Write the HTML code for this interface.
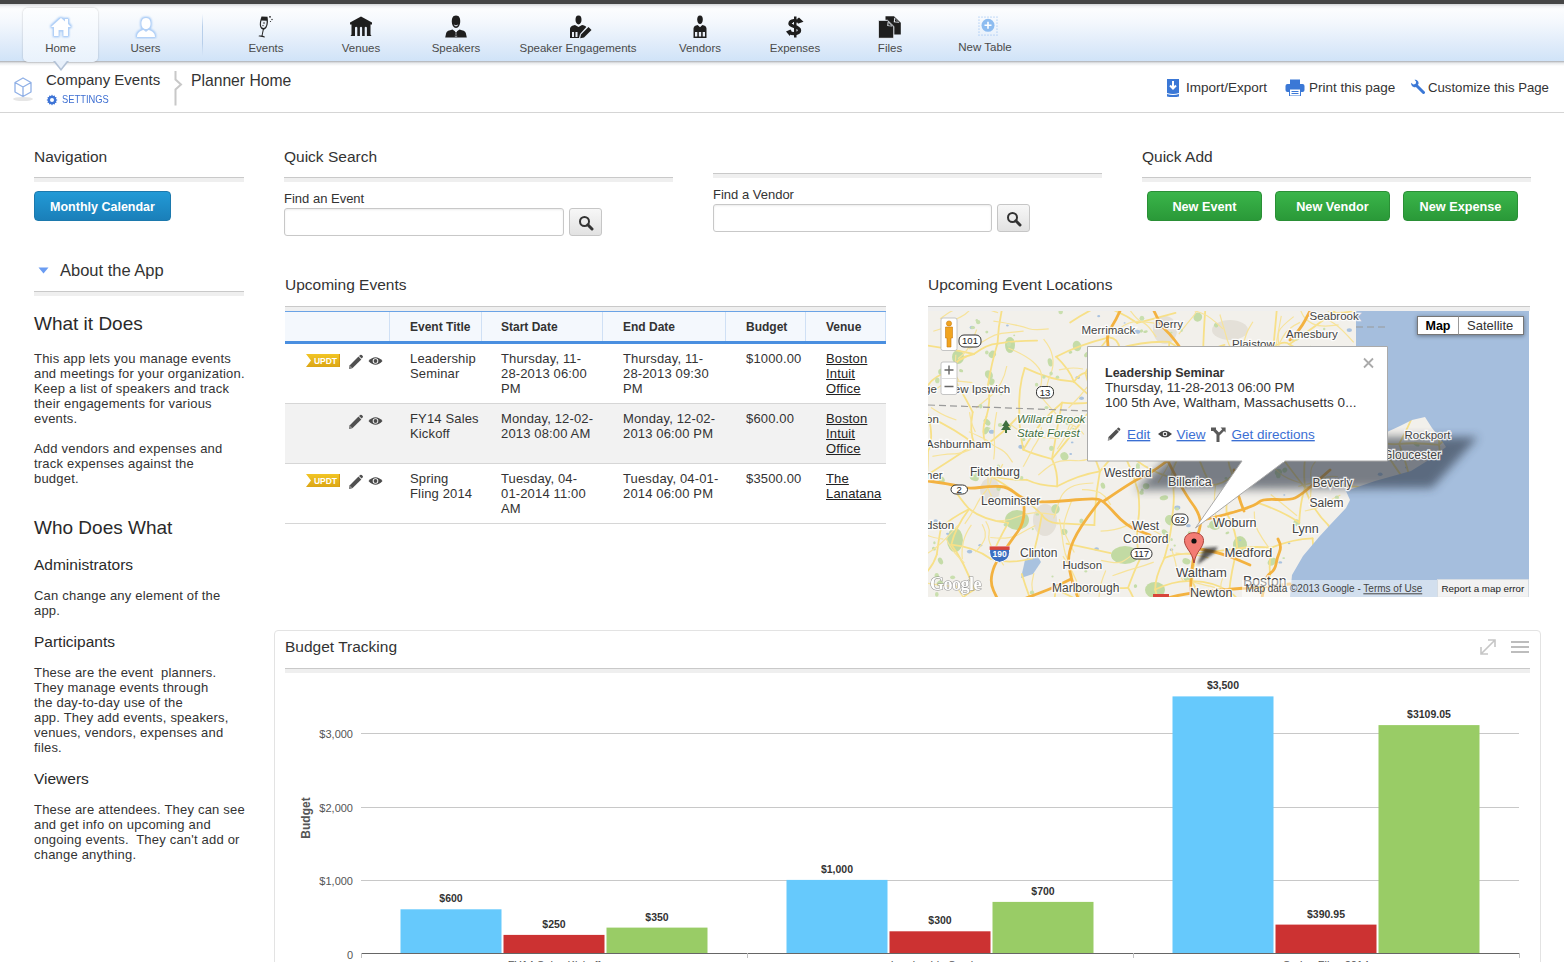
<!DOCTYPE html>
<html><head><meta charset="utf-8">
<style>
*{margin:0;padding:0;box-sizing:border-box}
html,body{width:1564px;height:962px;overflow:hidden;background:#fff;font-family:"Liberation Sans",sans-serif;color:#333}
.abs{position:absolute}
#topbar{position:absolute;left:0;top:0;width:1564px;height:4px;background:#464646}
#nav{position:absolute;left:0;top:4px;width:1564px;height:57px;background:linear-gradient(#d4d6d8 0px,#f3f4f6 2.5px,#fcfdfe 5px,#f4f8fd 18px,#e2edfa 38px,#d0e3f8 57px);}
#navshadow{position:absolute;left:0;top:61px;width:1564px;height:5px;background:linear-gradient(#a9adb2,#e8eaec 2px,#fff 5px)}
.navitem{position:absolute;top:4px;height:57px;text-align:center;font-size:11.5px;color:#444;}
.navitem .lbl{position:absolute;left:0;right:0;top:38px;white-space:nowrap;color:#4a4a4a}
.navitem svg{position:absolute;top:11px;left:50%;transform:translateX(-50%)}
#hometab{position:absolute;left:23px;top:8px;width:75px;height:54px;border-radius:5px;background:linear-gradient(#fdfeff,#e9f2fc);box-shadow:0 0 2px rgba(0,0,0,.25)}
.sep{position:absolute;left:202px;top:14px;width:1px;height:42px;background:linear-gradient(rgba(160,190,225,0),#b8cfea 30%,#b8cfea 70%,rgba(160,190,225,0))}
.h2{position:absolute;font-size:15.5px;color:#333;white-space:nowrap}
.rule{position:absolute;height:5px;border-top:1px solid #c9c9c9;background:#efefef}
.body13{font-size:13px;line-height:15px;color:#333;letter-spacing:.2px}
.btn-blue{position:absolute;border-radius:4px;background:linear-gradient(#229ad6,#1a7fb9);color:#fff;font-weight:bold;font-size:12.5px;text-align:center;line-height:30px;border:1px solid #1c79ad}
.btn-green{position:absolute;top:191px;width:115px;height:30px;border-radius:4px;background:linear-gradient(#3ab54a,#2a9938);color:#fff;font-weight:bold;font-size:12.7px;text-align:center;line-height:30px;border:1px solid #2a8f36}
.input{position:absolute;border:1px solid #c8c8c8;border-radius:3px;background:#fff;box-shadow:inset 0 1px 2px rgba(0,0,0,.08)}
.sbtn{position:absolute;width:33px;height:28px;border:1px solid #c6c6c6;border-radius:3px;background:linear-gradient(#f7f7f7,#e2e2e2)}
.sbtn svg{position:absolute;left:8px;top:6px}
table.ev{position:absolute;left:285px;top:311px;width:601px;border-collapse:collapse;font-size:13px;line-height:15px;color:#333}
.lk{color:#222;text-decoration:underline}
.th{top:320px;font-size:12px;font-weight:bold;color:#333;white-space:nowrap}
.td{font-size:13px;line-height:15px;color:#333;white-space:nowrap;letter-spacing:.15px}
</style></head><body>
<div id="topbar"></div>
<div id="nav"></div>
<div id="navshadow"></div>
<div id="hometab"></div>
<div class="sep"></div>

<!-- nav items -->
<div class="navitem" style="left:23px;width:75px">
 <svg width="26" height="24" viewBox="0 0 26 24" style="top:11px"><defs><filter id="gl" x="-40%" y="-40%" width="180%" height="180%"><feMorphology in="SourceAlpha" operator="dilate" radius="0.7"/><feGaussianBlur stdDeviation="1.1"/><feColorMatrix values="0 0 0 0 0.45 0 0 0 0 0.64 0 0 0 0 0.93 0 0 0 1.6 0"/><feMerge><feMergeNode/><feMergeNode in="SourceGraphic"/></feMerge></filter></defs>
 <path filter="url(#gl)" d="M3 12 L13 3 L17 6.5 L17 4 L20 4 L20 9 L23 12 L20 12 L20 21 L15.5 21 L15.5 15 L10.5 15 L10.5 21 L6 21 L6 12 Z" fill="#fff"/></svg>
 <div class="lbl">Home</div></div>
<div class="navitem" style="left:108px;width:75px">
 <svg width="26" height="24" viewBox="0 0 26 24"><path filter="url(#gl)" d="M13 3 C9.5 3 8.5 6 8.5 8.5 C8.5 11.5 10 14 13 14 C16 14 17.5 11.5 17.5 8.5 C17.5 6 16.5 3 13 3 Z M4 22 C4 17.5 8 15.5 10.5 15 L13 17 L15.5 15 C18 15.5 22 17.5 22 22 Z" fill="#fff"/></svg>
 <div class="lbl">Users</div></div>
<div class="navitem" style="left:228px;width:76px">
 <svg width="20" height="24" viewBox="0 0 20 24"><path d="M5.5 1.5 L11.5 1.8 C12 5 12.5 9 10.5 12.5 C9.5 14 8.5 14.5 7.8 14.7 L6.5 20.5 L9 21.8 L8.6 22.6 L2.5 21.2 L3 20.4 L5.6 20.6 L6.8 14.6 C5 14 3.8 12 3.8 9.5 C3.8 6.5 4.8 3.5 5.5 1.5 Z" fill="#222"/><path d="M5.5 5.5 L10.6 5.8 C10.8 8 10.5 10.5 9.3 12 C8.2 13.3 6.2 13.3 5.3 11.5 C4.6 9.8 4.9 7.5 5.5 5.5Z" fill="#e9eef5"/><circle cx="8" cy="8" r=".8" fill="#222"/><circle cx="7" cy="10.6" r=".7" fill="#222"/><circle cx="14" cy="1.8" r=".9" fill="#222"/><circle cx="16" cy="4.5" r=".7" fill="#222"/><circle cx="14.5" cy="6.5" r=".6" fill="#222"/></svg>
 <div class="lbl">Events</div></div>
<div class="navitem" style="left:323px;width:76px">
 <svg width="24" height="22" viewBox="0 0 24 22" style="top:12px"><path d="M12 0.5 L23 6.5 L23 8.5 L21.5 8.5 L21.5 18.5 L22.5 20 L1.5 20 L2.5 18.5 L2.5 8.5 L1 8.5 L1 6.5 Z" fill="#1e1e1e"/><path d="M6 11.5 Q7.2 10 8.3 11.5 L8.3 20 L6 20Z M10.9 11.5 Q12 10 13.1 11.5 L13.1 20 L10.9 20Z M15.7 11.5 Q16.8 10 17.9 11.5 L17.9 20 L15.7 20Z" fill="#e7eef8"/></svg>
 <div class="lbl">Venues</div></div>
<div class="navitem" style="left:418px;width:76px">
 <svg width="24" height="24" viewBox="0 0 24 24"><path d="M12 0.5 C8.5 0.5 7.8 3.5 7.8 6.5 C7.8 10 9.5 13 12 13 C14.5 13 16.2 10 16.2 6.5 C16.2 3.5 15.5 0.5 12 0.5Z" fill="#1e1e1e"/><path d="M9.7 9.3 Q12 11.2 14.3 9.3 Q13.8 11.3 12 11.4 Q10.2 11.3 9.7 9.3Z" fill="#e9eef6"/><path d="M1.2 22.5 L2.2 18 C2.8 16.3 5 15.4 8.5 14.6 L12 17 L15.5 14.6 C19 15.4 21.2 16.3 21.8 18 L22.8 22.5Z" fill="#1e1e1e"/><path d="M10.8 15.8 L13.2 15.8 L12.6 17 L13.2 21.5 L10.8 21.5 L11.4 17Z" fill="#e9eef6"/><path d="M11.5 17 L12.5 17 L12.8 21 L11.2 21Z" fill="#1e1e1e"/></svg>
 <div class="lbl">Speakers</div></div>
<div class="navitem" style="left:515px;width:126px">
 <svg width="26" height="24" viewBox="0 0 26 24" style="margin-left:3px"><path d="M10.5 0.5 C8 0.5 7.5 2.5 7.5 4.8 C7.5 7.5 8.8 9.5 10.5 9.5 C12.2 9.5 13.5 7.5 13.5 4.8 C13.5 2.5 13 0.5 10.5 0.5Z" fill="#1e1e1e"/><path d="M2 23 L2 14 C2 11.5 4.5 10.5 7 10 L10.5 12 L14 10 C16 10.3 17.5 11 18.3 12 L12 19 L11 23Z" fill="#1e1e1e"/><path d="M4 17 L6 17 L6 22 L4 22Z M7.5 17 L9.5 17 L9.5 22 L7.5 22Z" fill="#e9eef6"/><path d="M13 19.5 L20.5 12 L23.5 15 L16 22.5 L12.2 23.3Z" fill="#1e1e1e"/><path d="M14 20 L21 13.2 L22.3 14.6 L15.3 21.4Z" fill="#e9eef6" opacity=".0"/></svg>
 <div class="lbl">Speaker Engagements</div></div>
<div class="navitem" style="left:662px;width:76px">
 <svg width="20" height="24" viewBox="0 0 20 24"><path d="M10 0.5 C7.8 0.5 7.2 2.5 7.2 4.5 C7.2 7 8.3 9 10 9 C11.7 9 12.8 7 12.8 4.5 C12.8 2.5 12.2 0.5 10 0.5Z" fill="#1e1e1e"/><path d="M3.5 23 L3.5 13.5 C3.5 11.5 5.5 10.3 7.5 10 L10 12 L12.5 10 C14.5 10.3 16.5 11.5 16.5 13.5 L16.5 23Z" fill="#1e1e1e"/><path d="M5 17 L7.3 17 L7.3 21.5 L5 21.5Z M8.85 17 L11.15 17 L11.15 21.5 L8.85 21.5Z M12.7 17 L15 17 L15 21.5 L12.7 21.5Z" fill="#e9eef6"/><path d="M9.2 10.7 L10.8 10.7 L10 12.2Z" fill="#e9eef6"/></svg>
 <div class="lbl">Vendors</div></div>
<div class="navitem" style="left:757px;width:76px">
 <svg width="20" height="22" viewBox="0 0 20 22" style="top:11.5px;margin-left:0px"><path d="M9 0.5 H11.5 V21.5 H9Z" fill="#1e1e1e"/><path d="M13.5 6 C12 4.2 5.5 3.8 5 7.5 C4.6 10.8 14.5 10 14.5 14.3 C14.5 18.3 7 18.2 4.6 16.3" fill="none" stroke="#1e1e1e" stroke-width="3.4"/><path d="M12 3 L14 1.5 L18.5 5.8 L12.8 7.8 L13.2 5.5Z" fill="#1e1e1e"/><path d="M6.5 15 L5.5 13.5 L1 15.6 L4.8 20 L5.5 17.8Z" fill="#1e1e1e"/><path d="M8 6.2 L9 6 V8.5 L8 8Z" fill="#e6eef8"/></svg>
 <div class="lbl">Expenses</div></div>
<div class="navitem" style="left:852px;width:76px">
 <svg width="23" height="23" viewBox="0 0 23 23" style="top:11.5px"><path d="M7 0.3 H15.5 L22.3 6.8 V18.5 H7Z" fill="#1e1e1e"/><path d="M15.8 1.5 L21 6.8 L15.2 6.2Z" fill="#eef3fa"/><path d="M16.5 2.8 L19.8 6 L16.4 5.6Z" fill="#1e1e1e"/><path d="M0 4.3 H9 L15.3 10.4 V22.3 H0Z" fill="#1e1e1e" stroke="#eef3fa" stroke-width="1"/><path d="M9.2 5.5 L14.2 10.5 L8.8 10Z" fill="#eef3fa"/><path d="M9.9 6.8 L12.8 9.7 L9.8 9.4Z" fill="#1e1e1e"/></svg>
 <div class="lbl">Files</div></div>
<div class="navitem" style="left:947px;width:76px">
 <svg width="22" height="22" viewBox="0 0 22 22" style="top:11px;margin-left:2.5px"><path d="M2 2 H20 V20 H2 Z" fill="none" stroke="#7fb0ee" stroke-width="1.2" stroke-linecap="round" stroke-dasharray="0 3"/><circle cx="11" cy="10.3" r="6.5" fill="#8dbcf0"/><path d="M11 6.8 V13.8 M7.5 10.3 H14.5" stroke="#fff" stroke-width="1.6"/></svg>
 <div class="lbl" style="top:37px">New Table</div></div>

<!-- home pointer -->
<svg class="abs" style="left:52px;top:61px" width="18" height="11" viewBox="0 0 18 11"><path d="M1 0 L9 10 L17 0Z" fill="#b3c2d6"/><path d="M3.2 0 L9 7.4 L14.8 0Z" fill="#e8f0fa"/></svg>

<!-- breadcrumb -->
<svg class="abs" style="left:10px;top:74px" width="26" height="30" viewBox="0 0 26 30"><ellipse cx="13" cy="25" rx="10" ry="2" fill="#e6e6e6"/><path d="M13 4 L21 8.5 L21 18 L13 22.5 L5 18 L5 8.5Z M5 8.5 L13 13 L21 8.5 M13 13 L13 22.5" fill="none" stroke="#90b0e6" stroke-width="1.3" stroke-linejoin="round"/></svg>
<div class="abs" style="left:46px;top:71px;font-size:15px;color:#333;white-space:nowrap">Company Events</div>
<svg class="abs" style="left:46px;top:94px" width="12" height="12" viewBox="0 0 12 12"><path d="M6 0.5 L7 2 L8.8 1.4 L9 3 L10.6 3.2 L10 5 L11.5 6 L10 7 L10.6 8.8 L9 9 L8.8 10.6 L7 10 L6 11.5 L5 10 L3.2 10.6 L3 9 L1.4 8.8 L2 7 L0.5 6 L2 5 L1.4 3.2 L3 3 L3.2 1.4 L5 2Z" fill="#3e74d6"/><circle cx="6" cy="6" r="2" fill="#fff"/></svg>
<div class="abs" style="left:62px;top:92.5px;font-size:10.5px;color:#3e6fd2;white-space:nowrap;transform:scaleX(.89);transform-origin:0 0">SETTINGS</div>
<svg class="abs" style="left:173px;top:70px" width="12" height="38" viewBox="0 0 12 38"><path d="M2.5 1 L2.5 9.5 L8 14.5 L2.5 19.5 L2.5 35.5" fill="none" stroke="#c8c8c8" stroke-width="2"/></svg>
<div class="abs" style="left:191px;top:71.5px;font-size:15.7px;color:#333;white-space:nowrap">Planner Home</div>

<!-- header actions -->
<svg class="abs" style="left:1166px;top:79px" width="14" height="18" viewBox="0 0 14 18"><path d="M1 0 L13 0 L13 14 Q7 16 1 14Z" fill="#3b78d6"/><path d="M1 15 Q7 17 13 15 L13 17.5 Q7 19 1 17.5Z" fill="#3b78d6"/><path d="M7 2 V9 M4 6.5 L7 9.5 L10 6.5" stroke="#fff" stroke-width="2" fill="none"/></svg>
<div class="abs" style="left:1186px;top:80px;font-size:13.5px;color:#333;white-space:nowrap">Import/Export</div>
<svg class="abs" style="left:1285px;top:79px" width="20" height="17" viewBox="0 0 20 17"><rect x="5" y="0.5" width="10" height="5" fill="#3b78d6"/><rect x="0.5" y="5" width="19" height="8" rx="2" fill="#3b78d6"/><rect x="4.5" y="10" width="11" height="7" fill="#fff" stroke="#3b78d6"/><path d="M6.5 12.5 H13.5 M6.5 14.5 H13.5" stroke="#3b78d6"/></svg>
<div class="abs" style="left:1309px;top:80px;font-size:13.5px;color:#333;white-space:nowrap">Print this page</div>
<svg class="abs" style="left:1410px;top:79px;transform:scaleX(-1)" width="15" height="15" viewBox="0 0 15 15"><path d="M1.5 13.5 L8 7" stroke="#3b78d6" stroke-width="3" stroke-linecap="round"/><path d="M6.5 5 C6 2.5 8 0.5 10.5 0.8 L8.8 2.8 L9.5 5 L11.8 5.6 L13.8 3.8 C14.2 6.5 12 8.7 9.5 8.2Z" fill="#3b78d6"/></svg>
<div class="abs" style="left:1428px;top:80px;font-size:13.2px;color:#333;white-space:nowrap">Customize this Page</div>
<div class="abs" style="left:0;top:112px;width:1564px;height:1px;background:#d5d5d5"></div>

<!-- LEFT COLUMN -->
<div class="h2" style="left:34px;top:148px">Navigation</div>
<div class="rule" style="left:34px;top:177px;width:210px"></div>
<div class="btn-blue" style="left:34px;top:191px;width:137px;height:30px">Monthly Calendar</div>
<svg class="abs" style="left:38px;top:267px" width="11" height="7" viewBox="0 0 11 7"><path d="M0.5 0.5 L10.5 0.5 L5.5 6.5Z" fill="#6a9cf2"/></svg>
<div class="h2" style="left:60px;top:261px;font-size:16.5px">About the App</div>
<div class="rule" style="left:34px;top:291px;width:210px"></div>

<div class="abs" style="left:34px;top:313px;font-size:19px;color:#2a2a2a;white-space:nowrap">What it Does</div>
<div class="abs body13" style="left:34px;top:351px;width:215px">This app lets you manage events<br>and meetings for your organization.<br>Keep a list of speakers and track<br>their engagements for various<br>events.<br><br>Add vendors and expenses and<br>track expenses against the<br>budget.</div>
<div class="abs" style="left:34px;top:517px;font-size:19px;color:#2a2a2a;white-space:nowrap">Who Does What</div>
<div class="abs" style="left:34px;top:556px;font-size:15.5px;color:#2a2a2a;white-space:nowrap">Administrators</div>
<div class="abs body13" style="left:34px;top:588px;width:215px">Can change any element of the<br>app.</div>
<div class="abs" style="left:34px;top:633px;font-size:15.5px;color:#2a2a2a;white-space:nowrap">Participants</div>
<div class="abs body13" style="left:34px;top:665px;width:215px">These are the event&nbsp; planners.<br>They manage events through<br>the day-to-day use of the<br>app. They add events, speakers,<br>venues, vendors, expenses and<br>files.</div>
<div class="abs" style="left:34px;top:770px;font-size:15.5px;color:#2a2a2a;white-space:nowrap">Viewers</div>
<div class="abs body13" style="left:34px;top:802px;width:215px">These are attendees. They can see<br>and get info on upcoming and<br>ongoing events.&nbsp; They can't add or<br>change anything.</div>

<!-- QUICK SEARCH -->
<div class="h2" style="left:284px;top:147.5px">Quick Search</div>
<div class="rule" style="left:284px;top:177px;width:389px"></div>
<div class="abs" style="left:284px;top:191px;font-size:13px;color:#333">Find an Event</div>
<div class="input" style="left:284px;top:208px;width:280px;height:28px"></div>
<div class="sbtn" style="left:569px;top:208px"><svg width="16" height="16" viewBox="0 0 16 16"><circle cx="6.5" cy="6.5" r="4.5" fill="none" stroke="#333" stroke-width="2"/><path d="M9.8 9.8 L14 14" stroke="#333" stroke-width="3" stroke-linecap="round"/></svg></div>

<div class="rule" style="left:713px;top:173px;width:389px"></div>
<div class="abs" style="left:713px;top:187px;font-size:13px;color:#333">Find a Vendor</div>
<div class="input" style="left:713px;top:204px;width:279px;height:28px"></div>
<div class="sbtn" style="left:997px;top:204px"><svg width="16" height="16" viewBox="0 0 16 16"><circle cx="6.5" cy="6.5" r="4.5" fill="none" stroke="#333" stroke-width="2"/><path d="M9.8 9.8 L14 14" stroke="#333" stroke-width="3" stroke-linecap="round"/></svg></div>

<!-- QUICK ADD -->
<div class="h2" style="left:1142px;top:147.5px">Quick Add</div>
<div class="rule" style="left:1142px;top:177px;width:389px"></div>
<div class="btn-green" style="left:1147px">New Event</div>
<div class="btn-green" style="left:1275px">New Vendor</div>
<div class="btn-green" style="left:1403px">New Expense</div>

<!-- UPCOMING EVENTS -->
<div class="h2" style="left:285px;top:276px">Upcoming Events</div>
<div class="rule" style="left:285px;top:306px;width:601px;height:5px"></div>
<div class="abs" style="left:285px;top:311px;width:601px;height:30px;background:#f4f8fd;border-top:1px solid #6aa3e6"></div>
<div class="abs" style="left:285px;top:341px;width:601px;height:3px;background:#4a8fe0"></div>
<div class="abs" style="left:389px;top:312px;width:1px;height:29px;background:#cfe0f5"></div>
<div class="abs" style="left:481px;top:312px;width:1px;height:29px;background:#cfe0f5"></div>
<div class="abs" style="left:602px;top:312px;width:1px;height:29px;background:#cfe0f5"></div>
<div class="abs" style="left:725px;top:312px;width:1px;height:29px;background:#cfe0f5"></div>
<div class="abs" style="left:805px;top:312px;width:1px;height:29px;background:#cfe0f5"></div>
<div class="abs" style="left:885px;top:312px;width:1px;height:29px;background:#cfe0f5"></div>
<div class="abs th" style="left:410px">Event Title</div>
<div class="abs th" style="left:501px">Start Date</div>
<div class="abs th" style="left:623px">End Date</div>
<div class="abs th" style="left:746px">Budget</div>
<div class="abs th" style="left:826px">Venue</div>
<!-- row separators -->
<div class="abs" style="left:285px;top:404px;width:601px;height:60px;background:#f2f2f2"></div>
<div class="abs" style="left:285px;top:403px;width:601px;height:1px;background:#d6d6d6"></div>
<div class="abs" style="left:285px;top:463px;width:601px;height:1px;background:#d6d6d6"></div>
<div class="abs" style="left:285px;top:523px;width:601px;height:1px;background:#d6d6d6"></div>
<!-- row 1 -->
<div class="abs td" style="left:410px;top:351px">Leadership<br>Seminar</div>
<div class="abs td" style="left:501px;top:351px">Thursday, 11-<br>28-2013 06:00<br>PM</div>
<div class="abs td" style="left:623px;top:351px">Thursday, 11-<br>28-2013 09:30<br>PM</div>
<div class="abs td" style="left:746px;top:351px">$1000.00</div>
<div class="abs td" style="left:826px;top:351px"><span class="lk">Boston</span><br><span class="lk">Intuit</span><br><span class="lk">Office</span></div>
<!-- row 2 -->
<div class="abs td" style="left:410px;top:411px">FY14 Sales<br>Kickoff</div>
<div class="abs td" style="left:501px;top:411px">Monday, 12-02-<br>2013 08:00 AM</div>
<div class="abs td" style="left:623px;top:411px">Monday, 12-02-<br>2013 06:00 PM</div>
<div class="abs td" style="left:746px;top:411px">$600.00</div>
<div class="abs td" style="left:826px;top:411px"><span class="lk">Boston</span><br><span class="lk">Intuit</span><br><span class="lk">Office</span></div>
<!-- row 3 -->
<div class="abs td" style="left:410px;top:471px">Spring<br>Fling 2014</div>
<div class="abs td" style="left:501px;top:471px">Tuesday, 04-<br>01-2014 11:00<br>AM</div>
<div class="abs td" style="left:623px;top:471px">Tuesday, 04-01-<br>2014 06:00 PM</div>
<div class="abs td" style="left:746px;top:471px">$3500.00</div>
<div class="abs td" style="left:826px;top:471px"><span class="lk">The</span><br><span class="lk">Lanatana</span></div>
<!-- icons -->
<svg class="abs" style="left:306px;top:354px" width="35" height="13" viewBox="0 0 35 13"><defs><linearGradient id="bg354" x1="0" y1="0" x2="0" y2="1"><stop offset="0" stop-color="#f2c524"/><stop offset="1" stop-color="#dba515"/></linearGradient></defs><path d="M0 0 H34 V13 H0 L5 6.5Z" fill="url(#bg354)"/><path d="M33 0 H34 V13 H33Z" fill="#d99a12"/><text x="19.5" y="10" text-anchor="middle" font-family="Liberation Sans" font-weight="bold" font-size="8.5" fill="#fff">UPDT</text></svg>
<svg class="abs" style="left:306px;top:474px" width="35" height="13" viewBox="0 0 35 13"><defs><linearGradient id="bg474" x1="0" y1="0" x2="0" y2="1"><stop offset="0" stop-color="#f2c524"/><stop offset="1" stop-color="#dba515"/></linearGradient></defs><path d="M0 0 H34 V13 H0 L5 6.5Z" fill="url(#bg474)"/><path d="M33 0 H34 V13 H33Z" fill="#d99a12"/><text x="19.5" y="10" text-anchor="middle" font-family="Liberation Sans" font-weight="bold" font-size="8.5" fill="#fff">UPDT</text></svg>
<svg class="abs" style="left:347px;top:354px" width="16" height="16" viewBox="0 0 16 16"><path d="M2 15 L2.8 11.2 L11.5 2.6 L14.3 5.4 L5.6 14.1Z" fill="#505050"/><path d="M12 2.1 L13.2 0.9 Q14 0.3 14.8 1.1 L15.7 2 Q16.3 2.8 15.6 3.5 L14.6 4.5Z" fill="#505050"/><path d="M2 15 L2.8 11.2 L5.6 14.1Z" fill="#888"/></svg>
<svg class="abs" style="left:367.5px;top:356px" width="15" height="10" viewBox="0 0 15 10"><path d="M0.5 5 Q7.5 -2.5 14.5 5 Q7.5 12.5 0.5 5Z" fill="#4a4a4a"/><circle cx="7.5" cy="5" r="2.8" fill="#fff"/><circle cx="7.5" cy="5" r="1.9" fill="#4a4a4a"/></svg>
<svg class="abs" style="left:347px;top:414px" width="16" height="16" viewBox="0 0 16 16"><path d="M2 15 L2.8 11.2 L11.5 2.6 L14.3 5.4 L5.6 14.1Z" fill="#505050"/><path d="M12 2.1 L13.2 0.9 Q14 0.3 14.8 1.1 L15.7 2 Q16.3 2.8 15.6 3.5 L14.6 4.5Z" fill="#505050"/><path d="M2 15 L2.8 11.2 L5.6 14.1Z" fill="#888"/></svg>
<svg class="abs" style="left:367.5px;top:416px" width="15" height="10" viewBox="0 0 15 10"><path d="M0.5 5 Q7.5 -2.5 14.5 5 Q7.5 12.5 0.5 5Z" fill="#4a4a4a"/><circle cx="7.5" cy="5" r="2.8" fill="#f2f2f2"/><circle cx="7.5" cy="5" r="1.9" fill="#4a4a4a"/></svg>
<svg class="abs" style="left:347px;top:474px" width="16" height="16" viewBox="0 0 16 16"><path d="M2 15 L2.8 11.2 L11.5 2.6 L14.3 5.4 L5.6 14.1Z" fill="#505050"/><path d="M12 2.1 L13.2 0.9 Q14 0.3 14.8 1.1 L15.7 2 Q16.3 2.8 15.6 3.5 L14.6 4.5Z" fill="#505050"/><path d="M2 15 L2.8 11.2 L5.6 14.1Z" fill="#888"/></svg>
<svg class="abs" style="left:367.5px;top:476px" width="15" height="10" viewBox="0 0 15 10"><path d="M0.5 5 Q7.5 -2.5 14.5 5 Q7.5 12.5 0.5 5Z" fill="#4a4a4a"/><circle cx="7.5" cy="5" r="2.8" fill="#fff"/><circle cx="7.5" cy="5" r="1.9" fill="#4a4a4a"/></svg>


<!-- MAP -->
<div class="h2" style="left:928px;top:276px">Upcoming Event Locations</div>
<div class="rule" style="left:928px;top:306px;width:602px;height:5px"></div>
<!--MAPSTART--><svg class="abs" style="left:928px;top:311px" width="601" height="286" viewBox="0 0 601 286">
<defs><filter id="blur6" x="-20%" y="-50%" width="140%" height="200%"><feGaussianBlur stdDeviation="5"/></filter><filter id="blur2"><feGaussianBlur stdDeviation="1.5"/></filter><clipPath id="mc"><rect width="601" height="286"/></clipPath></defs>
<g clip-path="url(#mc)">
<rect width="601" height="286" fill="#f2f0eb"/>
<ellipse cx="117" cy="209" rx="12" ry="16" fill="#e4e0d8"/>
<ellipse cx="62" cy="179" rx="10" ry="12" fill="#e4e0d8"/>
<ellipse cx="237" cy="19" rx="12" ry="14" fill="#e4e0d8"/>
<ellipse cx="302" cy="19" rx="18" ry="10" fill="#e4e0d8"/>
<ellipse cx="159.3" cy="43.1" rx="3.8" ry="2.1" fill="#c5dca8" transform="rotate(137 159.3 43.1)"/>
<ellipse cx="46.3" cy="166.7" rx="4.7" ry="3.1" fill="#c5dca8" transform="rotate(22 46.3 166.7)"/>
<ellipse cx="213.4" cy="20.0" rx="1.8" ry="1.5" fill="#c5dca8" transform="rotate(144 213.4 20.0)"/>
<ellipse cx="60.9" cy="63.8" rx="3.7" ry="4.7" fill="#c5dca8" transform="rotate(147 60.9 63.8)"/>
<ellipse cx="288.1" cy="14.2" rx="2.3" ry="2.1" fill="#c5dca8" transform="rotate(34 288.1 14.2)"/>
<ellipse cx="142.5" cy="41.3" rx="1.9" ry="1.4" fill="#c5dca8" transform="rotate(174 142.5 41.3)"/>
<ellipse cx="88.9" cy="166.3" rx="3.7" ry="3.0" fill="#c5dca8" transform="rotate(140 88.9 166.3)"/>
<ellipse cx="350.4" cy="161.4" rx="3.7" ry="3.3" fill="#c5dca8" transform="rotate(136 350.4 161.4)"/>
<ellipse cx="210.4" cy="89.8" rx="3.5" ry="3.1" fill="#c5dca8" transform="rotate(76 210.4 89.8)"/>
<ellipse cx="122.2" cy="51.4" rx="4.2" ry="2.4" fill="#c5dca8" transform="rotate(76 122.2 51.4)"/>
<ellipse cx="258.4" cy="250.3" rx="4.1" ry="3.0" fill="#c5dca8" transform="rotate(18 258.4 250.3)"/>
<ellipse cx="58.1" cy="119.6" rx="4.1" ry="2.6" fill="#c5dca8" transform="rotate(125 58.1 119.6)"/>
<ellipse cx="207.5" cy="275.1" rx="1.8" ry="1.7" fill="#c5dca8" transform="rotate(80 207.5 275.1)"/>
<ellipse cx="167.3" cy="100.2" rx="3.2" ry="3.7" fill="#c5dca8" transform="rotate(17 167.3 100.2)"/>
<ellipse cx="413.3" cy="270.2" rx="3.2" ry="3.3" fill="#c5dca8" transform="rotate(15 413.3 270.2)"/>
<ellipse cx="359.7" cy="88.5" rx="3.5" ry="3.7" fill="#c5dca8" transform="rotate(114 359.7 88.5)"/>
<ellipse cx="140.0" cy="110.3" rx="3.8" ry="2.0" fill="#c5dca8" transform="rotate(118 140.0 110.3)"/>
<ellipse cx="174.9" cy="174.7" rx="3.2" ry="2.2" fill="#c5dca8" transform="rotate(73 174.9 174.7)"/>
<ellipse cx="63.6" cy="70.8" rx="2.9" ry="3.4" fill="#c5dca8" transform="rotate(20 63.6 70.8)"/>
<ellipse cx="81.9" cy="114.9" rx="2.5" ry="1.5" fill="#c5dca8" transform="rotate(110 81.9 114.9)"/>
<ellipse cx="425.1" cy="79.6" rx="3.0" ry="2.3" fill="#c5dca8" transform="rotate(97 425.1 79.6)"/>
<ellipse cx="471.2" cy="43.2" rx="2.1" ry="1.5" fill="#c5dca8" transform="rotate(59 471.2 43.2)"/>
<ellipse cx="5.9" cy="237.7" rx="2.1" ry="1.6" fill="#c5dca8" transform="rotate(37 5.9 237.7)"/>
<ellipse cx="206.1" cy="105.6" rx="3.5" ry="4.4" fill="#c5dca8" transform="rotate(176 206.1 105.6)"/>
<ellipse cx="422.7" cy="271.8" rx="3.8" ry="4.1" fill="#c5dca8" transform="rotate(116 422.7 271.8)"/>
<ellipse cx="442.6" cy="223.1" rx="4.6" ry="5.2" fill="#c5dca8" transform="rotate(100 442.6 223.1)"/>
<ellipse cx="195.9" cy="112.7" rx="3.2" ry="2.6" fill="#c5dca8" transform="rotate(48 195.9 112.7)"/>
<ellipse cx="33.1" cy="59.7" rx="2.1" ry="1.6" fill="#c5dca8" transform="rotate(13 33.1 59.7)"/>
<ellipse cx="50.4" cy="162.1" rx="3.4" ry="4.3" fill="#c5dca8" transform="rotate(157 50.4 162.1)"/>
<ellipse cx="12.5" cy="250.1" rx="3.6" ry="2.3" fill="#c5dca8" transform="rotate(64 12.5 250.1)"/>
<ellipse cx="470.1" cy="172.3" rx="3.2" ry="1.9" fill="#c5dca8" transform="rotate(124 470.1 172.3)"/>
<ellipse cx="488.6" cy="133.3" rx="3.2" ry="1.8" fill="#c5dca8" transform="rotate(26 488.6 133.3)"/>
<ellipse cx="368.8" cy="211.7" rx="3.2" ry="3.3" fill="#c5dca8" transform="rotate(132 368.8 211.7)"/>
<ellipse cx="11.4" cy="272.0" rx="3.3" ry="2.1" fill="#c5dca8" transform="rotate(139 11.4 272.0)"/>
<ellipse cx="449.8" cy="216.8" rx="2.5" ry="2.6" fill="#c5dca8" transform="rotate(23 449.8 216.8)"/>
<ellipse cx="342.5" cy="74.7" rx="2.8" ry="1.8" fill="#c5dca8" transform="rotate(57 342.5 74.7)"/>
<ellipse cx="262.0" cy="222.8" rx="2.7" ry="1.8" fill="#c5dca8" transform="rotate(49 262.0 222.8)"/>
<ellipse cx="396.6" cy="234.0" rx="4.1" ry="2.8" fill="#c5dca8" transform="rotate(132 396.6 234.0)"/>
<ellipse cx="242.4" cy="209.1" rx="5.0" ry="5.6" fill="#c5dca8" transform="rotate(120 242.4 209.1)"/>
<ellipse cx="127.5" cy="198.1" rx="4.8" ry="4.2" fill="#c5dca8" transform="rotate(89 127.5 198.1)"/>
<ellipse cx="469.9" cy="104.3" rx="2.3" ry="1.5" fill="#c5dca8" transform="rotate(50 469.9 104.3)"/>
<ellipse cx="166.2" cy="138.0" rx="4.9" ry="4.9" fill="#c5dca8" transform="rotate(0 166.2 138.0)"/>
<ellipse cx="235.9" cy="186.8" rx="4.3" ry="2.4" fill="#c5dca8" transform="rotate(169 235.9 186.8)"/>
<ellipse cx="59.0" cy="111.1" rx="4.0" ry="2.6" fill="#c5dca8" transform="rotate(45 59.0 111.1)"/>
<ellipse cx="213.5" cy="181.9" rx="1.8" ry="2.3" fill="#c5dca8" transform="rotate(101 213.5 181.9)"/>
<ellipse cx="227.9" cy="212.6" rx="1.8" ry="1.1" fill="#c5dca8" transform="rotate(32 227.9 212.6)"/>
<ellipse cx="13.6" cy="169.0" rx="3.1" ry="3.2" fill="#c5dca8" transform="rotate(156 13.6 169.0)"/>
<ellipse cx="406.6" cy="280.4" rx="3.8" ry="3.0" fill="#c5dca8" transform="rotate(140 406.6 280.4)"/>
<ellipse cx="269.8" cy="6.1" rx="4.3" ry="4.6" fill="#c5dca8" transform="rotate(26 269.8 6.1)"/>
<ellipse cx="259.1" cy="267.0" rx="3.0" ry="3.6" fill="#c5dca8" transform="rotate(54 259.1 267.0)"/>
<ellipse cx="13.8" cy="60.9" rx="3.3" ry="3.6" fill="#c5dca8" transform="rotate(83 13.8 60.9)"/>
<ellipse cx="127.6" cy="119.8" rx="2.0" ry="2.4" fill="#c5dca8" transform="rotate(90 127.6 119.8)"/>
<ellipse cx="441.7" cy="189.5" rx="4.4" ry="4.0" fill="#c5dca8" transform="rotate(128 441.7 189.5)"/>
<ellipse cx="64.3" cy="43.4" rx="3.3" ry="3.9" fill="#c5dca8" transform="rotate(46 64.3 43.4)"/>
<ellipse cx="299.4" cy="221.9" rx="2.0" ry="1.2" fill="#c5dca8" transform="rotate(158 299.4 221.9)"/>
<ellipse cx="356.8" cy="159.2" rx="2.6" ry="2.4" fill="#c5dca8" transform="rotate(142 356.8 159.2)"/>
<ellipse cx="237.4" cy="222.1" rx="4.6" ry="2.5" fill="#c5dca8" transform="rotate(48 237.4 222.1)"/>
<ellipse cx="136.2" cy="220.9" rx="3.3" ry="3.1" fill="#c5dca8" transform="rotate(16 136.2 220.9)"/>
<ellipse cx="218.1" cy="175.2" rx="3.3" ry="3.0" fill="#c5dca8" transform="rotate(177 218.1 175.2)"/>
<ellipse cx="136.4" cy="145.3" rx="4.3" ry="3.9" fill="#c5dca8" transform="rotate(63 136.4 145.3)"/>
<ellipse cx="344.0" cy="250.7" rx="4.8" ry="3.4" fill="#c5dca8" transform="rotate(143 344.0 250.7)"/>
<ellipse cx="439.2" cy="57.9" rx="3.1" ry="2.6" fill="#c5dca8" transform="rotate(100 439.2 57.9)"/>
<ellipse cx="217.5" cy="20.7" rx="2.3" ry="1.3" fill="#c5dca8" transform="rotate(171 217.5 20.7)"/>
<ellipse cx="149.0" cy="35.0" rx="4.2" ry="5.3" fill="#c5dca8" transform="rotate(164 149.0 35.0)"/>
<ellipse cx="324.8" cy="40.9" rx="4.6" ry="5.8" fill="#c5dca8" transform="rotate(56 324.8 40.9)"/>
<ellipse cx="367.4" cy="26.9" rx="4.6" ry="2.9" fill="#c5dca8" transform="rotate(170 367.4 26.9)"/>
<ellipse cx="409.6" cy="46.2" rx="3.0" ry="2.7" fill="#c5dca8" transform="rotate(86 409.6 46.2)"/>
<ellipse cx="207.3" cy="102.0" rx="1.8" ry="1.4" fill="#c5dca8" transform="rotate(86 207.3 102.0)"/>
<ellipse cx="272.6" cy="126.0" rx="1.6" ry="1.2" fill="#c5dca8" transform="rotate(159 272.6 126.0)"/>
<ellipse cx="145.4" cy="274.8" rx="1.9" ry="2.3" fill="#c5dca8" transform="rotate(58 145.4 274.8)"/>
<ellipse cx="30" cy="46" rx="6" ry="7" fill="#c2daa3"/>
<ellipse cx="89" cy="209" rx="12" ry="10" fill="#c2daa3"/>
<ellipse cx="27" cy="229" rx="8" ry="12" fill="#c2daa3"/>
<ellipse cx="227" cy="279" rx="10" ry="8" fill="#c2daa3"/>
<ellipse cx="82" cy="34" rx="5" ry="8" fill="#c2daa3"/>
<ellipse cx="197" cy="244" rx="14" ry="9" fill="#c2daa3"/>
<ellipse cx="287" cy="214" rx="6" ry="5" fill="#c2daa3"/>
<ellipse cx="312" cy="234" rx="7" ry="9" fill="#c2daa3"/>
<ellipse cx="478.1" cy="30.0" rx="1.5" ry="1.1" fill="#a9c2df"/>
<ellipse cx="19.5" cy="222.8" rx="1.5" ry="1.1" fill="#a9c2df"/>
<ellipse cx="63.7" cy="120.8" rx="2.8" ry="2.0" fill="#a9c2df"/>
<ellipse cx="402.9" cy="74.0" rx="1.3" ry="0.9" fill="#a9c2df"/>
<ellipse cx="452.2" cy="163.2" rx="2.4" ry="1.7" fill="#a9c2df"/>
<ellipse cx="44.0" cy="16.5" rx="2.4" ry="1.7" fill="#a9c2df"/>
<ellipse cx="209.3" cy="20.7" rx="2.9" ry="2.0" fill="#a9c2df"/>
<ellipse cx="312.1" cy="229.3" rx="1.2" ry="0.8" fill="#a9c2df"/>
<ellipse cx="421.3" cy="19.1" rx="2.7" ry="1.9" fill="#a9c2df"/>
<ellipse cx="223.3" cy="97.0" rx="2.1" ry="1.5" fill="#a9c2df"/>
<ellipse cx="455.9" cy="76.6" rx="1.3" ry="0.9" fill="#a9c2df"/>
<ellipse cx="259.2" cy="68.2" rx="1.2" ry="0.9" fill="#a9c2df"/>
<ellipse cx="79.4" cy="14.4" rx="1.4" ry="1.0" fill="#a9c2df"/>
<ellipse cx="153.5" cy="87.2" rx="2.5" ry="1.8" fill="#a9c2df"/>
<ellipse cx="142.7" cy="143.0" rx="1.4" ry="0.9" fill="#a9c2df"/>
<ellipse cx="170.7" cy="5.2" rx="1.5" ry="1.1" fill="#a9c2df"/>
<ellipse cx="7.6" cy="209.7" rx="2.1" ry="1.5" fill="#a9c2df"/>
<ellipse cx="93.2" cy="135.8" rx="2.9" ry="2.0" fill="#a9c2df"/>
<ellipse cx="52.3" cy="234.2" rx="1.9" ry="1.3" fill="#a9c2df"/>
<ellipse cx="243.5" cy="238.7" rx="1.8" ry="1.3" fill="#a9c2df"/>
<ellipse cx="249.3" cy="196.7" rx="3.0" ry="2.1" fill="#a9c2df"/>
<ellipse cx="168.6" cy="238.0" rx="2.4" ry="1.7" fill="#a9c2df"/>
<ellipse cx="312.9" cy="115.7" rx="1.7" ry="1.2" fill="#a9c2df"/>
<ellipse cx="26.8" cy="37.1" rx="1.1" ry="0.8" fill="#a9c2df"/>
<ellipse cx="364.5" cy="73.1" rx="1.3" ry="0.9" fill="#a9c2df"/>
<ellipse cx="41.6" cy="240.6" rx="2.7" ry="1.9" fill="#a9c2df"/>
<ellipse cx="329.9" cy="80.6" rx="1.5" ry="1.0" fill="#a9c2df"/>
<ellipse cx="144.2" cy="131.4" rx="1.3" ry="0.9" fill="#a9c2df"/>
<ellipse cx="219.3" cy="75.3" rx="2.9" ry="2.0" fill="#a9c2df"/>
<ellipse cx="478.5" cy="156.5" rx="1.5" ry="1.0" fill="#a9c2df"/>
<ellipse cx="475.1" cy="88.5" rx="1.7" ry="1.2" fill="#a9c2df"/>
<ellipse cx="0.5" cy="109.1" rx="1.9" ry="1.4" fill="#a9c2df"/>
<ellipse cx="247.4" cy="57.5" rx="2.0" ry="1.4" fill="#a9c2df"/>
<ellipse cx="2.4" cy="75.6" rx="1.2" ry="0.8" fill="#a9c2df"/>
<ellipse cx="196.6" cy="11.9" rx="1.0" ry="0.7" fill="#a9c2df"/>
<ellipse cx="149.7" cy="66.6" rx="2.2" ry="1.5" fill="#a9c2df"/>
<ellipse cx="260.4" cy="214.7" rx="2.3" ry="1.6" fill="#a9c2df"/>
<ellipse cx="352.3" cy="251.4" rx="1.8" ry="1.2" fill="#a9c2df"/>
<ellipse cx="160.5" cy="281.6" rx="1.3" ry="0.9" fill="#a9c2df"/>
<ellipse cx="356.3" cy="184.0" rx="1.1" ry="0.8" fill="#a9c2df"/>
<ellipse cx="411.0" cy="255.1" rx="2.3" ry="1.6" fill="#a9c2df"/>
<ellipse cx="361.1" cy="232.3" rx="1.3" ry="0.9" fill="#a9c2df"/>
<ellipse cx="257.7" cy="144.3" rx="2.7" ry="1.9" fill="#a9c2df"/>
<ellipse cx="395.9" cy="236.4" rx="2.2" ry="1.5" fill="#a9c2df"/>
<ellipse cx="439.3" cy="195.3" rx="2.4" ry="1.7" fill="#a9c2df"/>
<path d="M97.0 249.0 l10 -8 l6 10 l-8 12 l-12 4z" fill="#a9c2df"/>
<path d="M-35.2 -32.4 Q-17.8 -36.1 0.7 -45.5" fill="none" stroke="#f7e088" stroke-width="1.8" stroke-linecap="round"/>
<path d="M-35.2 -32.4 Q-32.8 -20.7 -23.0 -0.9" fill="none" stroke="#f7e088" stroke-width="1.8" stroke-linecap="round"/>
<path d="M-23.0 -0.9 Q-10.8 -0.2 -8.1 -6.7" fill="none" stroke="#f7e088" stroke-width="1.8" stroke-linecap="round"/>
<path d="M-33.8 36.3 Q-21.8 34.7 -12.2 33.1" fill="none" stroke="#f7e088" stroke-width="1.8" stroke-linecap="round"/>
<path d="M-30.6 109.6 Q-10.3 112.2 0.5 105.6" fill="none" stroke="#f7e088" stroke-width="1.8" stroke-linecap="round"/>
<path d="M-44.6 130.9 Q-19.6 130.4 -0.0 140.2" fill="none" stroke="#f7e088" stroke-width="1.8" stroke-linecap="round"/>
<path d="M-44.6 130.9 Q-45.0 148.6 -44.6 178.1" fill="none" stroke="#f7e088" stroke-width="1.8" stroke-linecap="round"/>
<path d="M-44.6 178.1 Q-31.5 187.1 -29.0 192.1" fill="none" stroke="#f7e088" stroke-width="1.8" stroke-linecap="round"/>
<path d="M-29.0 192.1 Q-26.5 227.1 -21.5 250.1" fill="none" stroke="#f7e088" stroke-width="1.8" stroke-linecap="round"/>
<path d="M-21.5 250.1 Q-11.7 260.4 -4.8 265.0" fill="none" stroke="#f7e088" stroke-width="1.8" stroke-linecap="round"/>
<path d="M-30.0 275.0 Q-22.8 266.3 -4.8 265.0" fill="none" stroke="#f7e088" stroke-width="1.8" stroke-linecap="round"/>
<path d="M-30.0 275.0 Q-41.3 281.2 -42.9 293.4" fill="none" stroke="#f7e088" stroke-width="1.8" stroke-linecap="round"/>
<path d="M-42.9 293.4 Q-18.6 294.9 -5.5 294.8" fill="none" stroke="#f7e088" stroke-width="1.8" stroke-linecap="round"/>
<path d="M0.7 -45.5 Q23.0 -21.1 43.0 -3.0" fill="none" stroke="#f7e088" stroke-width="1.8" stroke-linecap="round"/>
<path d="M-8.1 -6.7 Q22.6 -8.9 43.0 -3.0" fill="none" stroke="#f7e088" stroke-width="1.8" stroke-linecap="round"/>
<path d="M-8.1 -6.7 Q-14.1 13.1 -12.2 33.1" fill="none" stroke="#f7e088" stroke-width="1.8" stroke-linecap="round"/>
<path d="M-8.1 -6.7 Q21.8 -22.6 40.9 -36.6" fill="none" stroke="#f7e088" stroke-width="1.8" stroke-linecap="round"/>
<path d="M-12.2 33.1 Q18.0 36.4 45.9 43.0" fill="none" stroke="#f7e088" stroke-width="1.8" stroke-linecap="round"/>
<path d="M-12.2 33.1 Q-5.0 55.7 -1.5 76.9" fill="none" stroke="#f7e088" stroke-width="1.8" stroke-linecap="round"/>
<path d="M-1.5 76.9 Q3.9 65.6 21.0 60.5" fill="none" stroke="#f7e088" stroke-width="1.8" stroke-linecap="round"/>
<path d="M-1.5 76.9 Q-4.6 94.3 0.5 105.6" fill="none" stroke="#f7e088" stroke-width="1.8" stroke-linecap="round"/>
<path d="M0.5 105.6 Q6.1 128.3 -0.0 140.2" fill="none" stroke="#f7e088" stroke-width="1.8" stroke-linecap="round"/>
<path d="M0.5 105.6 Q28.4 118.6 46.5 133.3" fill="none" stroke="#f7e088" stroke-width="1.8" stroke-linecap="round"/>
<path d="M-0.0 140.2 Q-0.3 157.5 -1.1 164.2" fill="none" stroke="#f7e088" stroke-width="1.8" stroke-linecap="round"/>
<path d="M-1.1 164.2 Q24.2 148.3 46.5 133.3" fill="none" stroke="#f7e088" stroke-width="1.8" stroke-linecap="round"/>
<path d="M12.9 216.9 Q21.7 207.8 41.2 198.0" fill="none" stroke="#f7e088" stroke-width="1.8" stroke-linecap="round"/>
<path d="M12.9 216.9 Q10.2 232.2 8.8 243.4" fill="none" stroke="#f7e088" stroke-width="1.8" stroke-linecap="round"/>
<path d="M8.8 243.4 Q5.4 254.6 -4.8 265.0" fill="none" stroke="#f7e088" stroke-width="1.8" stroke-linecap="round"/>
<path d="M-4.8 265.0 Q-9.8 284.6 -5.5 294.8" fill="none" stroke="#f7e088" stroke-width="1.8" stroke-linecap="round"/>
<path d="M-5.5 294.8 Q6.5 299.3 24.1 299.4" fill="none" stroke="#f7e088" stroke-width="1.8" stroke-linecap="round"/>
<path d="M43.0 -3.0 Q56.4 0.1 75.7 -8.4" fill="none" stroke="#f7e088" stroke-width="1.8" stroke-linecap="round"/>
<path d="M43.0 -3.0 Q45.0 -26.9 57.6 -45.4" fill="none" stroke="#f7e088" stroke-width="1.8" stroke-linecap="round"/>
<path d="M45.9 43.0 Q59.2 33.1 69.5 32.6" fill="none" stroke="#f7e088" stroke-width="1.8" stroke-linecap="round"/>
<path d="M45.9 43.0 Q28.3 46.8 21.0 60.5" fill="none" stroke="#f7e088" stroke-width="1.8" stroke-linecap="round"/>
<path d="M21.0 60.5 Q32.6 77.4 44.7 101.2" fill="none" stroke="#f7e088" stroke-width="1.8" stroke-linecap="round"/>
<path d="M44.7 101.2 Q41.0 121.0 46.5 133.3" fill="none" stroke="#f7e088" stroke-width="1.8" stroke-linecap="round"/>
<path d="M46.5 133.3 Q51.4 130.7 58.0 133.9" fill="none" stroke="#f7e088" stroke-width="1.8" stroke-linecap="round"/>
<path d="M22.9 173.4 Q32.7 188.6 41.2 198.0" fill="none" stroke="#f7e088" stroke-width="1.8" stroke-linecap="round"/>
<path d="M41.2 198.0 Q55.9 209.5 80.2 211.9" fill="none" stroke="#f7e088" stroke-width="1.8" stroke-linecap="round"/>
<path d="M41.2 198.0 Q27.2 216.6 23.3 233.6" fill="none" stroke="#f7e088" stroke-width="1.8" stroke-linecap="round"/>
<path d="M23.3 233.6 Q46.4 235.7 62.9 248.0" fill="none" stroke="#f7e088" stroke-width="1.8" stroke-linecap="round"/>
<path d="M23.3 233.6 Q36.6 251.2 46.1 278.7" fill="none" stroke="#f7e088" stroke-width="1.8" stroke-linecap="round"/>
<path d="M46.1 278.7 Q30.8 287.4 24.1 299.4" fill="none" stroke="#f7e088" stroke-width="1.8" stroke-linecap="round"/>
<path d="M24.1 299.4 Q53.2 305.4 77.2 309.7" fill="none" stroke="#f7e088" stroke-width="1.8" stroke-linecap="round"/>
<path d="M75.7 -8.4 Q70.4 10.9 69.5 32.6" fill="none" stroke="#f7e088" stroke-width="1.8" stroke-linecap="round"/>
<path d="M69.5 32.6 Q87.7 29.5 109.1 29.6" fill="none" stroke="#f7e088" stroke-width="1.8" stroke-linecap="round"/>
<path d="M69.5 32.6 Q63.5 52.0 60.0 74.0" fill="none" stroke="#f7e088" stroke-width="1.8" stroke-linecap="round"/>
<path d="M60.0 74.0 Q63.2 90.6 58.4 105.7" fill="none" stroke="#f7e088" stroke-width="1.8" stroke-linecap="round"/>
<path d="M58.4 105.7 Q52.5 120.0 58.0 133.9" fill="none" stroke="#f7e088" stroke-width="1.8" stroke-linecap="round"/>
<path d="M58.0 133.9 Q75.2 122.5 91.3 104.2" fill="none" stroke="#f7e088" stroke-width="1.8" stroke-linecap="round"/>
<path d="M60.5 164.0 Q74.6 169.2 98.7 168.8" fill="none" stroke="#f7e088" stroke-width="1.8" stroke-linecap="round"/>
<path d="M60.5 164.0 Q88.8 179.5 113.9 203.6" fill="none" stroke="#f7e088" stroke-width="1.8" stroke-linecap="round"/>
<path d="M80.2 211.9 Q68.2 233.1 62.9 248.0" fill="none" stroke="#f7e088" stroke-width="1.8" stroke-linecap="round"/>
<path d="M62.9 248.0 Q81.5 253.4 103.9 247.5" fill="none" stroke="#f7e088" stroke-width="1.8" stroke-linecap="round"/>
<path d="M96.7 56.9 Q124.2 69.7 145.9 70.7" fill="none" stroke="#f7e088" stroke-width="1.8" stroke-linecap="round"/>
<path d="M96.7 56.9 Q90.0 77.0 91.3 104.2" fill="none" stroke="#f7e088" stroke-width="1.8" stroke-linecap="round"/>
<path d="M91.3 104.2 Q91.0 116.8 95.3 138.6" fill="none" stroke="#f7e088" stroke-width="1.8" stroke-linecap="round"/>
<path d="M95.3 138.6 Q104.4 142.8 124.0 148.0" fill="none" stroke="#f7e088" stroke-width="1.8" stroke-linecap="round"/>
<path d="M95.3 138.6 Q109.9 111.4 134.0 91.7" fill="none" stroke="#f7e088" stroke-width="1.8" stroke-linecap="round"/>
<path d="M98.7 168.8 Q110.8 174.7 129.2 175.3" fill="none" stroke="#f7e088" stroke-width="1.8" stroke-linecap="round"/>
<path d="M113.9 203.6 Q117.9 211.1 129.7 212.4" fill="none" stroke="#f7e088" stroke-width="1.8" stroke-linecap="round"/>
<path d="M113.9 203.6 Q109.5 229.4 103.9 247.5" fill="none" stroke="#f7e088" stroke-width="1.8" stroke-linecap="round"/>
<path d="M93.8 263.0 Q99.8 283.2 112.6 314.3" fill="none" stroke="#f7e088" stroke-width="1.8" stroke-linecap="round"/>
<path d="M112.6 314.3 Q119.0 306.8 124.8 298.9" fill="none" stroke="#f7e088" stroke-width="1.8" stroke-linecap="round"/>
<path d="M142.2 11.5 Q157.3 1.3 173.0 -5.7" fill="none" stroke="#f7e088" stroke-width="1.8" stroke-linecap="round"/>
<path d="M128.1 45.7 Q150.4 33.9 180.9 26.3" fill="none" stroke="#f7e088" stroke-width="1.8" stroke-linecap="round"/>
<path d="M128.1 45.7 Q141.5 58.4 145.9 70.7" fill="none" stroke="#f7e088" stroke-width="1.8" stroke-linecap="round"/>
<path d="M145.9 70.7 Q152.1 62.2 157.4 62.0" fill="none" stroke="#f7e088" stroke-width="1.8" stroke-linecap="round"/>
<path d="M145.9 70.7 Q161.1 84.8 168.6 90.6" fill="none" stroke="#f7e088" stroke-width="1.8" stroke-linecap="round"/>
<path d="M134.0 91.7 Q148.5 93.7 168.6 90.6" fill="none" stroke="#f7e088" stroke-width="1.8" stroke-linecap="round"/>
<path d="M134.0 91.7 Q128.7 119.5 124.0 148.0" fill="none" stroke="#f7e088" stroke-width="1.8" stroke-linecap="round"/>
<path d="M124.0 148.0 Q130.1 160.7 129.2 175.3" fill="none" stroke="#f7e088" stroke-width="1.8" stroke-linecap="round"/>
<path d="M124.0 148.0 Q150.2 115.8 168.6 90.6" fill="none" stroke="#f7e088" stroke-width="1.8" stroke-linecap="round"/>
<path d="M129.2 175.3 Q150.8 163.8 171.9 160.4" fill="none" stroke="#f7e088" stroke-width="1.8" stroke-linecap="round"/>
<path d="M129.7 212.4 Q145.7 212.9 166.4 214.2" fill="none" stroke="#f7e088" stroke-width="1.8" stroke-linecap="round"/>
<path d="M138.5 232.6 Q159.2 236.9 182.5 242.1" fill="none" stroke="#f7e088" stroke-width="1.8" stroke-linecap="round"/>
<path d="M127.6 277.7 Q149.8 278.5 175.0 274.2" fill="none" stroke="#f7e088" stroke-width="1.8" stroke-linecap="round"/>
<path d="M127.6 277.7 Q126.9 287.8 124.8 298.9" fill="none" stroke="#f7e088" stroke-width="1.8" stroke-linecap="round"/>
<path d="M127.6 277.7 Q150.0 289.4 160.6 293.9" fill="none" stroke="#f7e088" stroke-width="1.8" stroke-linecap="round"/>
<path d="M171.5 -24.8 Q182.0 -26.5 191.5 -23.3" fill="none" stroke="#f7e088" stroke-width="1.8" stroke-linecap="round"/>
<path d="M171.5 -24.8 Q171.0 -13.3 173.0 -5.7" fill="none" stroke="#f7e088" stroke-width="1.8" stroke-linecap="round"/>
<path d="M173.0 -5.7 Q193.9 1.1 209.2 12.0" fill="none" stroke="#f7e088" stroke-width="1.8" stroke-linecap="round"/>
<path d="M180.9 26.3 Q190.1 27.0 191.6 37.5" fill="none" stroke="#f7e088" stroke-width="1.8" stroke-linecap="round"/>
<path d="M180.9 26.3 Q164.3 46.3 157.4 62.0" fill="none" stroke="#f7e088" stroke-width="1.8" stroke-linecap="round"/>
<path d="M157.4 62.0 Q184.5 69.1 203.5 74.0" fill="none" stroke="#f7e088" stroke-width="1.8" stroke-linecap="round"/>
<path d="M157.4 62.0 Q159.7 72.2 168.6 90.6" fill="none" stroke="#f7e088" stroke-width="1.8" stroke-linecap="round"/>
<path d="M168.6 90.6 Q189.0 101.9 199.3 115.0" fill="none" stroke="#f7e088" stroke-width="1.8" stroke-linecap="round"/>
<path d="M168.6 90.6 Q166.9 114.8 161.6 132.6" fill="none" stroke="#f7e088" stroke-width="1.8" stroke-linecap="round"/>
<path d="M161.6 132.6 Q176.2 129.1 193.0 137.2" fill="none" stroke="#f7e088" stroke-width="1.8" stroke-linecap="round"/>
<path d="M161.6 132.6 Q169.1 152.3 171.9 160.4" fill="none" stroke="#f7e088" stroke-width="1.8" stroke-linecap="round"/>
<path d="M171.9 160.4 Q167.1 185.4 166.4 214.2" fill="none" stroke="#f7e088" stroke-width="1.8" stroke-linecap="round"/>
<path d="M171.9 160.4 Q180.9 148.9 193.0 137.2" fill="none" stroke="#f7e088" stroke-width="1.8" stroke-linecap="round"/>
<path d="M175.0 274.2 Q183.3 278.1 200.1 276.8" fill="none" stroke="#f7e088" stroke-width="1.8" stroke-linecap="round"/>
<path d="M209.2 12.0 Q225.3 7.9 247.5 1.9" fill="none" stroke="#f7e088" stroke-width="1.8" stroke-linecap="round"/>
<path d="M191.6 37.5 Q216.0 29.7 241.2 30.9" fill="none" stroke="#f7e088" stroke-width="1.8" stroke-linecap="round"/>
<path d="M203.5 74.0 Q222.6 73.1 240.1 70.8" fill="none" stroke="#f7e088" stroke-width="1.8" stroke-linecap="round"/>
<path d="M203.5 74.0 Q206.3 100.4 199.3 115.0" fill="none" stroke="#f7e088" stroke-width="1.8" stroke-linecap="round"/>
<path d="M199.3 115.0 Q217.1 107.8 227.1 105.6" fill="none" stroke="#f7e088" stroke-width="1.8" stroke-linecap="round"/>
<path d="M193.0 137.2 Q202.1 153.7 210.2 180.4" fill="none" stroke="#f7e088" stroke-width="1.8" stroke-linecap="round"/>
<path d="M193.0 137.2 Q214.6 158.0 243.9 167.1" fill="none" stroke="#f7e088" stroke-width="1.8" stroke-linecap="round"/>
<path d="M210.2 180.4 Q212.2 197.7 210.2 209.3" fill="none" stroke="#f7e088" stroke-width="1.8" stroke-linecap="round"/>
<path d="M210.2 209.3 Q207.3 228.7 211.6 248.8" fill="none" stroke="#f7e088" stroke-width="1.8" stroke-linecap="round"/>
<path d="M211.6 248.8 Q206.1 260.0 200.1 276.8" fill="none" stroke="#f7e088" stroke-width="1.8" stroke-linecap="round"/>
<path d="M200.1 276.8 Q209.3 292.0 214.4 315.6" fill="none" stroke="#f7e088" stroke-width="1.8" stroke-linecap="round"/>
<path d="M214.4 315.6 Q219.0 313.6 225.8 308.6" fill="none" stroke="#f7e088" stroke-width="1.8" stroke-linecap="round"/>
<path d="M241.2 30.9 Q258.9 42.8 275.0 44.9" fill="none" stroke="#f7e088" stroke-width="1.8" stroke-linecap="round"/>
<path d="M241.2 30.9 Q241.0 50.1 240.1 70.8" fill="none" stroke="#f7e088" stroke-width="1.8" stroke-linecap="round"/>
<path d="M240.1 70.8 Q255.6 67.9 265.7 55.3" fill="none" stroke="#f7e088" stroke-width="1.8" stroke-linecap="round"/>
<path d="M227.1 105.6 Q248.1 101.0 266.8 106.6" fill="none" stroke="#f7e088" stroke-width="1.8" stroke-linecap="round"/>
<path d="M227.1 105.6 Q238.3 125.8 250.8 145.9" fill="none" stroke="#f7e088" stroke-width="1.8" stroke-linecap="round"/>
<path d="M227.1 105.6 Q248.7 80.8 265.7 55.3" fill="none" stroke="#f7e088" stroke-width="1.8" stroke-linecap="round"/>
<path d="M250.8 145.9 Q255.2 135.4 264.3 127.4" fill="none" stroke="#f7e088" stroke-width="1.8" stroke-linecap="round"/>
<path d="M250.8 145.9 Q242.2 161.4 243.9 167.1" fill="none" stroke="#f7e088" stroke-width="1.8" stroke-linecap="round"/>
<path d="M243.9 167.1 Q247.7 183.3 244.1 206.1" fill="none" stroke="#f7e088" stroke-width="1.8" stroke-linecap="round"/>
<path d="M244.1 206.1 Q243.8 221.9 236.5 246.8" fill="none" stroke="#f7e088" stroke-width="1.8" stroke-linecap="round"/>
<path d="M236.5 246.8 Q248.9 242.1 267.5 242.3" fill="none" stroke="#f7e088" stroke-width="1.8" stroke-linecap="round"/>
<path d="M236.5 246.8 Q226.6 267.4 227.2 278.5" fill="none" stroke="#f7e088" stroke-width="1.8" stroke-linecap="round"/>
<path d="M227.2 278.5 Q246.7 268.9 264.2 270.2" fill="none" stroke="#f7e088" stroke-width="1.8" stroke-linecap="round"/>
<path d="M227.2 278.5 Q231.3 291.3 225.8 308.6" fill="none" stroke="#f7e088" stroke-width="1.8" stroke-linecap="round"/>
<path d="M271.5 -41.0 Q291.2 -33.9 315.9 -37.0" fill="none" stroke="#f7e088" stroke-width="1.8" stroke-linecap="round"/>
<path d="M277.2 -0.1 Q275.7 18.5 275.0 44.9" fill="none" stroke="#f7e088" stroke-width="1.8" stroke-linecap="round"/>
<path d="M275.0 44.9 Q287.3 35.7 296.5 33.9" fill="none" stroke="#f7e088" stroke-width="1.8" stroke-linecap="round"/>
<path d="M275.0 44.9 Q290.1 63.7 314.8 77.1" fill="none" stroke="#f7e088" stroke-width="1.8" stroke-linecap="round"/>
<path d="M266.8 106.6 Q287.5 89.5 314.8 77.1" fill="none" stroke="#f7e088" stroke-width="1.8" stroke-linecap="round"/>
<path d="M264.3 127.4 Q269.6 147.6 282.5 174.2" fill="none" stroke="#f7e088" stroke-width="1.8" stroke-linecap="round"/>
<path d="M282.5 174.2 Q295.6 173.8 304.7 164.2" fill="none" stroke="#f7e088" stroke-width="1.8" stroke-linecap="round"/>
<path d="M267.5 242.3 Q294.2 239.4 309.3 237.8" fill="none" stroke="#f7e088" stroke-width="1.8" stroke-linecap="round"/>
<path d="M267.5 242.3 Q266.2 250.8 264.2 270.2" fill="none" stroke="#f7e088" stroke-width="1.8" stroke-linecap="round"/>
<path d="M264.2 270.2 Q286.3 270.6 301.2 280.8" fill="none" stroke="#f7e088" stroke-width="1.8" stroke-linecap="round"/>
<path d="M264.2 270.2 Q275.1 290.4 280.0 316.8" fill="none" stroke="#f7e088" stroke-width="1.8" stroke-linecap="round"/>
<path d="M280.0 316.8 Q304.0 316.6 318.5 304.8" fill="none" stroke="#f7e088" stroke-width="1.8" stroke-linecap="round"/>
<path d="M280.0 316.8 Q290.1 301.8 301.2 280.8" fill="none" stroke="#f7e088" stroke-width="1.8" stroke-linecap="round"/>
<path d="M315.9 -37.0 Q327.6 -41.6 328.9 -46.2" fill="none" stroke="#f7e088" stroke-width="1.8" stroke-linecap="round"/>
<path d="M315.9 -37.0 Q312.7 -19.1 308.2 -4.8" fill="none" stroke="#f7e088" stroke-width="1.8" stroke-linecap="round"/>
<path d="M314.8 77.1 Q328.3 72.3 335.0 75.6" fill="none" stroke="#f7e088" stroke-width="1.8" stroke-linecap="round"/>
<path d="M300.2 127.4 Q316.2 126.5 338.8 123.6" fill="none" stroke="#f7e088" stroke-width="1.8" stroke-linecap="round"/>
<path d="M300.2 127.4 Q296.9 146.9 304.7 164.2" fill="none" stroke="#f7e088" stroke-width="1.8" stroke-linecap="round"/>
<path d="M304.7 164.2 Q297.5 177.2 298.6 201.8" fill="none" stroke="#f7e088" stroke-width="1.8" stroke-linecap="round"/>
<path d="M298.6 201.8 Q311.8 200.6 330.7 192.2" fill="none" stroke="#f7e088" stroke-width="1.8" stroke-linecap="round"/>
<path d="M298.6 201.8 Q308.8 220.6 309.3 237.8" fill="none" stroke="#f7e088" stroke-width="1.8" stroke-linecap="round"/>
<path d="M309.3 237.8 Q322.1 235.0 343.4 236.6" fill="none" stroke="#f7e088" stroke-width="1.8" stroke-linecap="round"/>
<path d="M309.3 237.8 Q303.0 260.8 301.2 280.8" fill="none" stroke="#f7e088" stroke-width="1.8" stroke-linecap="round"/>
<path d="M301.2 280.8 Q313.7 288.8 318.5 304.8" fill="none" stroke="#f7e088" stroke-width="1.8" stroke-linecap="round"/>
<path d="M328.9 -46.2 Q338.2 -30.7 349.7 -11.9" fill="none" stroke="#f7e088" stroke-width="1.8" stroke-linecap="round"/>
<path d="M349.7 -11.9 Q347.4 15.1 345.4 35.8" fill="none" stroke="#f7e088" stroke-width="1.8" stroke-linecap="round"/>
<path d="M345.4 35.8 Q356.3 29.0 361.3 33.3" fill="none" stroke="#f7e088" stroke-width="1.8" stroke-linecap="round"/>
<path d="M345.4 35.8 Q344.9 51.4 335.0 75.6" fill="none" stroke="#f7e088" stroke-width="1.8" stroke-linecap="round"/>
<path d="M335.0 75.6 Q352.2 62.0 379.6 59.7" fill="none" stroke="#f7e088" stroke-width="1.8" stroke-linecap="round"/>
<path d="M327.5 92.5 Q344.8 95.9 368.1 98.0" fill="none" stroke="#f7e088" stroke-width="1.8" stroke-linecap="round"/>
<path d="M327.5 92.5 Q332.7 113.3 338.8 123.6" fill="none" stroke="#f7e088" stroke-width="1.8" stroke-linecap="round"/>
<path d="M338.8 123.6 Q356.7 151.9 377.0 176.7" fill="none" stroke="#f7e088" stroke-width="1.8" stroke-linecap="round"/>
<path d="M338.8 123.6 Q351.6 113.2 368.1 98.0" fill="none" stroke="#f7e088" stroke-width="1.8" stroke-linecap="round"/>
<path d="M330.7 192.2 Q355.1 200.5 371.2 211.6" fill="none" stroke="#f7e088" stroke-width="1.8" stroke-linecap="round"/>
<path d="M343.4 236.6 Q364.6 227.9 384.6 227.3" fill="none" stroke="#f7e088" stroke-width="1.8" stroke-linecap="round"/>
<path d="M343.4 236.6 Q339.9 255.9 343.4 276.0" fill="none" stroke="#f7e088" stroke-width="1.8" stroke-linecap="round"/>
<path d="M348.0 317.9 Q351.1 313.7 364.4 304.8" fill="none" stroke="#f7e088" stroke-width="1.8" stroke-linecap="round"/>
<path d="M378.8 -41.8 Q389.3 -36.4 411.3 -23.3" fill="none" stroke="#f7e088" stroke-width="1.8" stroke-linecap="round"/>
<path d="M378.8 -41.8 Q374.8 -20.0 373.4 -8.4" fill="none" stroke="#f7e088" stroke-width="1.8" stroke-linecap="round"/>
<path d="M373.4 -8.4 Q387.4 -7.4 404.8 1.8" fill="none" stroke="#f7e088" stroke-width="1.8" stroke-linecap="round"/>
<path d="M361.3 33.3 Q388.3 48.8 419.6 67.1" fill="none" stroke="#f7e088" stroke-width="1.8" stroke-linecap="round"/>
<path d="M361.3 33.3 Q387.6 15.4 404.8 1.8" fill="none" stroke="#f7e088" stroke-width="1.8" stroke-linecap="round"/>
<path d="M379.6 59.7 Q368.5 77.6 368.1 98.0" fill="none" stroke="#f7e088" stroke-width="1.8" stroke-linecap="round"/>
<path d="M379.6 59.7 Q394.5 51.8 417.9 41.7" fill="none" stroke="#f7e088" stroke-width="1.8" stroke-linecap="round"/>
<path d="M368.1 98.0 Q387.8 95.2 411.9 94.3" fill="none" stroke="#f7e088" stroke-width="1.8" stroke-linecap="round"/>
<path d="M368.1 98.0 Q369.2 119.7 379.1 136.5" fill="none" stroke="#f7e088" stroke-width="1.8" stroke-linecap="round"/>
<path d="M379.1 136.5 Q374.5 154.0 377.0 176.7" fill="none" stroke="#f7e088" stroke-width="1.8" stroke-linecap="round"/>
<path d="M377.0 176.7 Q398.7 172.9 411.7 175.7" fill="none" stroke="#f7e088" stroke-width="1.8" stroke-linecap="round"/>
<path d="M377.0 176.7 Q372.2 190.7 371.2 211.6" fill="none" stroke="#f7e088" stroke-width="1.8" stroke-linecap="round"/>
<path d="M377.0 176.7 Q383.1 197.1 400.5 214.4" fill="none" stroke="#f7e088" stroke-width="1.8" stroke-linecap="round"/>
<path d="M384.6 227.3 Q387.2 254.5 385.2 277.8" fill="none" stroke="#f7e088" stroke-width="1.8" stroke-linecap="round"/>
<path d="M385.2 277.8 Q398.7 273.7 409.0 279.6" fill="none" stroke="#f7e088" stroke-width="1.8" stroke-linecap="round"/>
<path d="M385.2 277.8 Q373.5 286.0 364.4 304.8" fill="none" stroke="#f7e088" stroke-width="1.8" stroke-linecap="round"/>
<path d="M364.4 304.8 Q381.2 306.6 403.3 316.7" fill="none" stroke="#f7e088" stroke-width="1.8" stroke-linecap="round"/>
<path d="M411.3 -23.3 Q427.3 -28.7 451.3 -37.9" fill="none" stroke="#f7e088" stroke-width="1.8" stroke-linecap="round"/>
<path d="M411.3 -23.3 Q403.1 -12.7 404.8 1.8" fill="none" stroke="#f7e088" stroke-width="1.8" stroke-linecap="round"/>
<path d="M404.8 1.8 Q419.0 2.5 431.2 -1.5" fill="none" stroke="#f7e088" stroke-width="1.8" stroke-linecap="round"/>
<path d="M404.8 1.8 Q426.7 -19.7 451.3 -37.9" fill="none" stroke="#f7e088" stroke-width="1.8" stroke-linecap="round"/>
<path d="M417.9 41.7 Q429.4 36.0 443.3 41.0" fill="none" stroke="#f7e088" stroke-width="1.8" stroke-linecap="round"/>
<path d="M417.9 41.7 Q419.7 54.0 419.6 67.1" fill="none" stroke="#f7e088" stroke-width="1.8" stroke-linecap="round"/>
<path d="M419.6 67.1 Q428.8 66.1 441.7 55.7" fill="none" stroke="#f7e088" stroke-width="1.8" stroke-linecap="round"/>
<path d="M411.9 94.3 Q430.6 93.9 450.0 90.7" fill="none" stroke="#f7e088" stroke-width="1.8" stroke-linecap="round"/>
<path d="M411.7 175.7 Q423.7 173.9 437.7 177.5" fill="none" stroke="#f7e088" stroke-width="1.8" stroke-linecap="round"/>
<path d="M400.5 214.4 Q406.1 232.5 420.5 250.4" fill="none" stroke="#f7e088" stroke-width="1.8" stroke-linecap="round"/>
<path d="M420.5 250.4 Q411.0 261.7 409.0 279.6" fill="none" stroke="#f7e088" stroke-width="1.8" stroke-linecap="round"/>
<path d="M409.0 279.6 Q430.4 277.0 450.8 276.9" fill="none" stroke="#f7e088" stroke-width="1.8" stroke-linecap="round"/>
<path d="M409.0 279.6 Q406.1 299.9 403.3 316.7" fill="none" stroke="#f7e088" stroke-width="1.8" stroke-linecap="round"/>
<path d="M451.3 -37.9 Q439.4 -15.1 431.2 -1.5" fill="none" stroke="#f7e088" stroke-width="1.8" stroke-linecap="round"/>
<path d="M443.3 41.0 Q444.0 48.2 441.7 55.7" fill="none" stroke="#f7e088" stroke-width="1.8" stroke-linecap="round"/>
<path d="M441.7 55.7 Q463.6 62.6 479.6 68.6" fill="none" stroke="#f7e088" stroke-width="1.8" stroke-linecap="round"/>
<path d="M441.7 55.7 Q442.8 71.1 450.0 90.7" fill="none" stroke="#f7e088" stroke-width="1.8" stroke-linecap="round"/>
<path d="M450.0 90.7 Q462.2 91.9 484.9 103.6" fill="none" stroke="#f7e088" stroke-width="1.8" stroke-linecap="round"/>
<path d="M450.0 90.7 Q452.4 104.4 449.8 127.5" fill="none" stroke="#f7e088" stroke-width="1.8" stroke-linecap="round"/>
<path d="M449.8 127.5 Q456.4 134.6 471.1 132.9" fill="none" stroke="#f7e088" stroke-width="1.8" stroke-linecap="round"/>
<path d="M449.8 127.5 Q464.4 154.0 485.0 180.4" fill="none" stroke="#f7e088" stroke-width="1.8" stroke-linecap="round"/>
<path d="M437.7 177.5 Q463.9 176.0 485.0 180.4" fill="none" stroke="#f7e088" stroke-width="1.8" stroke-linecap="round"/>
<path d="M442.4 243.8 Q467.8 242.7 488.2 238.6" fill="none" stroke="#f7e088" stroke-width="1.8" stroke-linecap="round"/>
<path d="M450.8 276.9 Q466.4 267.3 477.9 264.2" fill="none" stroke="#f7e088" stroke-width="1.8" stroke-linecap="round"/>
<path d="M450.8 276.9 Q446.4 292.4 453.6 305.8" fill="none" stroke="#f7e088" stroke-width="1.8" stroke-linecap="round"/>
<path d="M453.6 305.8 Q467.5 305.0 476.9 306.1" fill="none" stroke="#f7e088" stroke-width="1.8" stroke-linecap="round"/>
<path d="M487.7 -44.8 Q505.4 -39.7 512.7 -46.3" fill="none" stroke="#f7e088" stroke-width="1.8" stroke-linecap="round"/>
<path d="M487.7 -44.8 Q480.8 -26.6 468.8 0.7" fill="none" stroke="#f7e088" stroke-width="1.8" stroke-linecap="round"/>
<path d="M487.7 -44.8 Q502.4 -19.4 522.2 0.4" fill="none" stroke="#f7e088" stroke-width="1.8" stroke-linecap="round"/>
<path d="M468.8 0.7 Q467.6 14.6 470.5 39.9" fill="none" stroke="#f7e088" stroke-width="1.8" stroke-linecap="round"/>
<path d="M470.5 39.9 Q486.7 44.5 507.4 41.8" fill="none" stroke="#f7e088" stroke-width="1.8" stroke-linecap="round"/>
<path d="M484.9 103.6 Q481.6 114.0 471.1 132.9" fill="none" stroke="#f7e088" stroke-width="1.8" stroke-linecap="round"/>
<path d="M484.9 103.6 Q503.5 82.7 511.6 67.8" fill="none" stroke="#f7e088" stroke-width="1.8" stroke-linecap="round"/>
<path d="M471.1 132.9 Q486.5 131.2 511.0 133.8" fill="none" stroke="#f7e088" stroke-width="1.8" stroke-linecap="round"/>
<path d="M471.1 132.9 Q478.8 152.4 485.0 180.4" fill="none" stroke="#f7e088" stroke-width="1.8" stroke-linecap="round"/>
<path d="M485.0 180.4 Q503.2 179.1 521.9 181.0" fill="none" stroke="#f7e088" stroke-width="1.8" stroke-linecap="round"/>
<path d="M485.0 180.4 Q471.3 191.5 468.4 213.1" fill="none" stroke="#f7e088" stroke-width="1.8" stroke-linecap="round"/>
<path d="M468.4 213.1 Q482.4 208.0 504.0 203.3" fill="none" stroke="#f7e088" stroke-width="1.8" stroke-linecap="round"/>
<path d="M488.2 238.6 Q493.2 241.1 500.3 236.3" fill="none" stroke="#f7e088" stroke-width="1.8" stroke-linecap="round"/>
<path d="M488.2 238.6 Q477.7 252.0 477.9 264.2" fill="none" stroke="#f7e088" stroke-width="1.8" stroke-linecap="round"/>
<path d="M477.9 264.2 Q503.3 277.7 518.2 282.4" fill="none" stroke="#f7e088" stroke-width="1.8" stroke-linecap="round"/>
<path d="M512.7 -46.3 Q520.4 -43.2 536.0 -30.9" fill="none" stroke="#f7e088" stroke-width="1.8" stroke-linecap="round"/>
<path d="M512.7 -46.3 Q515.8 -19.9 522.2 0.4" fill="none" stroke="#f7e088" stroke-width="1.8" stroke-linecap="round"/>
<path d="M522.2 0.4 Q532.8 -8.1 555.1 -9.6" fill="none" stroke="#f7e088" stroke-width="1.8" stroke-linecap="round"/>
<path d="M522.2 0.4 Q537.1 14.7 551.3 21.6" fill="none" stroke="#f7e088" stroke-width="1.8" stroke-linecap="round"/>
<path d="M507.4 41.8 Q513.2 58.7 511.6 67.8" fill="none" stroke="#f7e088" stroke-width="1.8" stroke-linecap="round"/>
<path d="M511.6 67.8 Q529.2 63.2 536.0 60.9" fill="none" stroke="#f7e088" stroke-width="1.8" stroke-linecap="round"/>
<path d="M515.0 90.7 Q532.8 90.8 548.9 97.4" fill="none" stroke="#f7e088" stroke-width="1.8" stroke-linecap="round"/>
<path d="M515.0 90.7 Q511.4 114.1 511.0 133.8" fill="none" stroke="#f7e088" stroke-width="1.8" stroke-linecap="round"/>
<path d="M511.0 133.8 Q513.8 162.2 521.9 181.0" fill="none" stroke="#f7e088" stroke-width="1.8" stroke-linecap="round"/>
<path d="M511.0 133.8 Q528.0 118.5 548.9 97.4" fill="none" stroke="#f7e088" stroke-width="1.8" stroke-linecap="round"/>
<path d="M521.9 181.0 Q530.7 179.1 533.7 176.0" fill="none" stroke="#f7e088" stroke-width="1.8" stroke-linecap="round"/>
<path d="M521.9 181.0 Q526.8 158.3 540.2 139.1" fill="none" stroke="#f7e088" stroke-width="1.8" stroke-linecap="round"/>
<path d="M504.0 203.3 Q513.2 203.8 534.2 204.3" fill="none" stroke="#f7e088" stroke-width="1.8" stroke-linecap="round"/>
<path d="M504.0 203.3 Q500.0 220.2 500.3 236.3" fill="none" stroke="#f7e088" stroke-width="1.8" stroke-linecap="round"/>
<path d="M500.3 236.3 Q512.3 254.6 518.2 282.4" fill="none" stroke="#f7e088" stroke-width="1.8" stroke-linecap="round"/>
<path d="M518.2 282.4 Q512.7 294.3 509.4 301.2" fill="none" stroke="#f7e088" stroke-width="1.8" stroke-linecap="round"/>
<path d="M536.0 -30.9 Q553.6 -38.6 578.8 -42.8" fill="none" stroke="#f7e088" stroke-width="1.8" stroke-linecap="round"/>
<path d="M555.1 -9.6 Q554.9 2.5 551.3 21.6" fill="none" stroke="#f7e088" stroke-width="1.8" stroke-linecap="round"/>
<path d="M536.0 60.9 Q565.6 68.2 587.1 70.9" fill="none" stroke="#f7e088" stroke-width="1.8" stroke-linecap="round"/>
<path d="M536.0 60.9 Q544.4 78.2 548.9 97.4" fill="none" stroke="#f7e088" stroke-width="1.8" stroke-linecap="round"/>
<path d="M548.9 97.4 Q569.5 83.5 587.1 70.9" fill="none" stroke="#f7e088" stroke-width="1.8" stroke-linecap="round"/>
<path d="M533.7 176.0 Q567.0 173.5 588.5 165.2" fill="none" stroke="#f7e088" stroke-width="1.8" stroke-linecap="round"/>
<path d="M533.7 176.0 Q536.8 196.0 534.2 204.3" fill="none" stroke="#f7e088" stroke-width="1.8" stroke-linecap="round"/>
<path d="M534.2 204.3 Q559.6 209.5 573.2 215.0" fill="none" stroke="#f7e088" stroke-width="1.8" stroke-linecap="round"/>
<path d="M534.2 204.3 Q539.9 219.0 537.5 230.1" fill="none" stroke="#f7e088" stroke-width="1.8" stroke-linecap="round"/>
<path d="M537.5 230.1 Q547.1 245.0 544.8 270.4" fill="none" stroke="#f7e088" stroke-width="1.8" stroke-linecap="round"/>
<path d="M544.8 270.4 Q570.1 265.9 588.1 262.5" fill="none" stroke="#f7e088" stroke-width="1.8" stroke-linecap="round"/>
<path d="M544.8 270.4 Q547.2 283.4 540.8 303.7" fill="none" stroke="#f7e088" stroke-width="1.8" stroke-linecap="round"/>
<path d="M540.8 303.7 Q556.7 311.3 571.2 311.9" fill="none" stroke="#f7e088" stroke-width="1.8" stroke-linecap="round"/>
<path d="M578.8 -42.8 Q595.9 -39.4 605.7 -44.5" fill="none" stroke="#f7e088" stroke-width="1.8" stroke-linecap="round"/>
<path d="M581.6 34.8 Q595.0 27.7 619.5 24.3" fill="none" stroke="#f7e088" stroke-width="1.8" stroke-linecap="round"/>
<path d="M581.6 34.8 Q597.3 15.0 620.6 -2.0" fill="none" stroke="#f7e088" stroke-width="1.8" stroke-linecap="round"/>
<path d="M587.1 70.9 Q609.2 44.1 619.5 24.3" fill="none" stroke="#f7e088" stroke-width="1.8" stroke-linecap="round"/>
<path d="M584.3 144.1 Q580.5 152.7 588.5 165.2" fill="none" stroke="#f7e088" stroke-width="1.8" stroke-linecap="round"/>
<path d="M588.5 165.2 Q607.6 164.9 624.2 160.0" fill="none" stroke="#f7e088" stroke-width="1.8" stroke-linecap="round"/>
<path d="M588.5 165.2 Q576.4 192.4 573.2 215.0" fill="none" stroke="#f7e088" stroke-width="1.8" stroke-linecap="round"/>
<path d="M573.2 215.0 Q598.0 214.2 612.1 210.7" fill="none" stroke="#f7e088" stroke-width="1.8" stroke-linecap="round"/>
<path d="M573.2 215.0 Q568.3 238.9 570.7 251.0" fill="none" stroke="#f7e088" stroke-width="1.8" stroke-linecap="round"/>
<path d="M570.7 251.0 Q589.1 245.8 612.1 242.8" fill="none" stroke="#f7e088" stroke-width="1.8" stroke-linecap="round"/>
<path d="M570.7 251.0 Q580.9 255.8 588.1 262.5" fill="none" stroke="#f7e088" stroke-width="1.8" stroke-linecap="round"/>
<path d="M588.1 262.5 Q596.1 267.0 603.9 260.8" fill="none" stroke="#f7e088" stroke-width="1.8" stroke-linecap="round"/>
<path d="M588.1 262.5 Q582.1 284.0 571.2 311.9" fill="none" stroke="#f7e088" stroke-width="1.8" stroke-linecap="round"/>
<path d="M620.6 -2.0 Q623.0 12.3 619.5 24.3" fill="none" stroke="#f7e088" stroke-width="1.8" stroke-linecap="round"/>
<path d="M620.6 -2.0 Q633.0 -20.5 647.3 -33.6" fill="none" stroke="#f7e088" stroke-width="1.8" stroke-linecap="round"/>
<path d="M619.5 24.3 Q634.1 22.8 637.8 26.3" fill="none" stroke="#f7e088" stroke-width="1.8" stroke-linecap="round"/>
<path d="M609.5 72.8 Q627.7 81.5 654.8 80.7" fill="none" stroke="#f7e088" stroke-width="1.8" stroke-linecap="round"/>
<path d="M609.5 72.8 Q603.5 81.6 599.5 94.2" fill="none" stroke="#f7e088" stroke-width="1.8" stroke-linecap="round"/>
<path d="M599.5 94.2 Q603.3 125.2 616.7 146.7" fill="none" stroke="#f7e088" stroke-width="1.8" stroke-linecap="round"/>
<path d="M599.5 94.2 Q615.4 119.5 634.6 147.7" fill="none" stroke="#f7e088" stroke-width="1.8" stroke-linecap="round"/>
<path d="M616.7 146.7 Q625.2 158.7 624.2 160.0" fill="none" stroke="#f7e088" stroke-width="1.8" stroke-linecap="round"/>
<path d="M616.7 146.7 Q632.5 161.4 645.0 176.9" fill="none" stroke="#f7e088" stroke-width="1.8" stroke-linecap="round"/>
<path d="M624.2 160.0 Q632.4 170.5 645.0 176.9" fill="none" stroke="#f7e088" stroke-width="1.8" stroke-linecap="round"/>
<path d="M612.1 210.7 Q616.1 228.6 612.1 242.8" fill="none" stroke="#f7e088" stroke-width="1.8" stroke-linecap="round"/>
<path d="M612.1 242.8 Q628.8 238.3 646.4 236.2" fill="none" stroke="#f7e088" stroke-width="1.8" stroke-linecap="round"/>
<path d="M603.9 260.8 Q624.7 255.8 648.6 259.3" fill="none" stroke="#f7e088" stroke-width="1.8" stroke-linecap="round"/>
<path d="M603.9 260.8 Q605.7 272.4 601.8 294.0" fill="none" stroke="#f7e088" stroke-width="1.8" stroke-linecap="round"/>
<path d="M647.3 -33.6 Q651.3 -18.6 647.8 -9.2" fill="none" stroke="#f7e088" stroke-width="1.8" stroke-linecap="round"/>
<path d="M637.8 26.3 Q645.9 47.7 654.8 80.7" fill="none" stroke="#f7e088" stroke-width="1.8" stroke-linecap="round"/>
<path d="M645.0 176.9 Q641.5 190.4 641.5 203.1" fill="none" stroke="#f7e088" stroke-width="1.8" stroke-linecap="round"/>
<path d="M641.5 203.1 Q639.3 223.1 646.4 236.2" fill="none" stroke="#f7e088" stroke-width="1.8" stroke-linecap="round"/>
<path d="M646.4 236.2 Q647.6 243.3 648.6 259.3" fill="none" stroke="#f7e088" stroke-width="1.8" stroke-linecap="round"/>
<path d="M398.8 278.4 Q401.3 267.0 401.6 260.8 L401.9 254.7" fill="none" stroke="#f7e39a" stroke-width="1.2" stroke-linejoin="round"/>
<path d="M310.9 71.3 Q319.2 71.5 326.2 67.1 Q333.2 62.8 338.8 58.4 Q344.3 54.1 350.2 52.0 L356.0 50.0" fill="none" stroke="#f7e39a" stroke-width="1.2" stroke-linejoin="round"/>
<path d="M15.4 228.1 Q4.9 227.0 -1.8 223.9 Q-8.6 220.9 -14.4 213.0 Q-20.2 205.1 -28.2 199.4 L-36.2 193.6" fill="none" stroke="#f7e39a" stroke-width="1.2" stroke-linejoin="round"/>
<path d="M243.3 237.5 Q247.6 250.2 248.2 255.2 Q248.9 260.3 252.1 265.3 L255.4 270.2" fill="none" stroke="#f7e39a" stroke-width="1.2" stroke-linejoin="round"/>
<path d="M350.6 49.5 Q362.7 58.0 364.6 63.4 L366.5 68.7" fill="none" stroke="#f7e39a" stroke-width="1.2" stroke-linejoin="round"/>
<path d="M250.8 23.1 Q261.5 9.5 265.2 5.4 Q268.9 1.3 270.5 -7.2 Q272.1 -15.8 276.3 -23.8 L280.4 -31.8" fill="none" stroke="#f7e39a" stroke-width="1.2" stroke-linejoin="round"/>
<path d="M95.2 155.8 Q101.2 144.8 103.0 140.9 Q104.7 137.1 108.3 131.9 Q112.0 126.7 112.7 121.4 L113.5 116.1" fill="none" stroke="#f7e39a" stroke-width="1.2" stroke-linejoin="round"/>
<path d="M-4.4 57.5 Q-4.5 37.7 -2.5 32.0 L-0.5 26.2" fill="none" stroke="#f7e39a" stroke-width="1.2" stroke-linejoin="round"/>
<path d="M420.7 104.6 Q429.9 115.9 432.1 122.3 L434.3 128.7" fill="none" stroke="#f7e39a" stroke-width="1.2" stroke-linejoin="round"/>
<path d="M120.7 17.9 Q106.2 19.5 101.0 17.7 Q95.8 15.9 86.6 13.9 Q77.4 11.8 71.4 11.0 L65.4 10.1" fill="none" stroke="#f7e39a" stroke-width="1.2" stroke-linejoin="round"/>
<path d="M384.4 237.4 Q393.0 235.4 401.6 239.2 Q410.2 243.0 415.4 248.0 Q420.7 253.1 425.3 256.6 L429.9 260.1" fill="none" stroke="#f7e39a" stroke-width="1.2" stroke-linejoin="round"/>
<path d="M370.3 175.4 Q385.5 171.9 392.1 168.6 Q398.7 165.4 404.2 165.4 L409.7 165.5" fill="none" stroke="#f7e39a" stroke-width="1.2" stroke-linejoin="round"/>
<path d="M410.6 13.9 Q392.1 16.7 384.4 12.6 Q376.6 8.5 374.4 3.3 Q372.2 -1.9 369.8 -5.3 L367.4 -8.6" fill="none" stroke="#f7e39a" stroke-width="1.2" stroke-linejoin="round"/>
<path d="M412.8 217.8 Q408.2 232.9 402.4 240.7 Q396.6 248.5 393.8 253.4 Q390.9 258.3 384.8 266.2 L378.7 274.0" fill="none" stroke="#f7e39a" stroke-width="1.2" stroke-linejoin="round"/>
<path d="M308.4 44.0 Q301.9 37.8 299.3 29.0 Q296.8 20.1 294.3 11.8 L291.9 3.5" fill="none" stroke="#f7e39a" stroke-width="1.2" stroke-linejoin="round"/>
<path d="M287.6 173.9 Q285.3 191.4 287.1 200.9 Q288.9 210.3 291.5 213.6 L294.1 217.0" fill="none" stroke="#f7e39a" stroke-width="1.2" stroke-linejoin="round"/>
<path d="M382.0 193.0 Q383.5 176.8 382.8 167.5 Q382.1 158.1 384.9 154.1 L387.7 150.2" fill="none" stroke="#f7e39a" stroke-width="1.2" stroke-linejoin="round"/>
<path d="M154.0 178.6 Q167.3 179.0 172.1 181.7 Q176.9 184.5 179.8 189.2 L182.7 193.9" fill="none" stroke="#f7e39a" stroke-width="1.2" stroke-linejoin="round"/>
<path d="M424.3 182.8 Q436.6 182.2 444.4 177.6 L452.1 172.9" fill="none" stroke="#f7e39a" stroke-width="1.2" stroke-linejoin="round"/>
<path d="M29.9 214.4 Q16.9 229.3 10.5 234.5 Q4.1 239.6 0.4 241.7 Q-3.2 243.9 -7.4 251.3 L-11.5 258.7" fill="none" stroke="#f7e39a" stroke-width="1.2" stroke-linejoin="round"/>
<path d="M425.7 31.4 Q413.5 17.2 406.1 12.4 Q398.7 7.6 394.5 7.9 Q390.2 8.2 385.8 6.8 L381.4 5.4" fill="none" stroke="#f7e39a" stroke-width="1.2" stroke-linejoin="round"/>
<path d="M3.0 96.6 Q13.8 103.9 21.1 106.4 L28.4 109.0" fill="none" stroke="#f7e39a" stroke-width="1.2" stroke-linejoin="round"/>
<path d="M225.7 251.1 Q215.8 254.9 207.6 257.2 Q199.5 259.4 192.0 262.1 L184.5 264.7" fill="none" stroke="#f7e39a" stroke-width="1.2" stroke-linejoin="round"/>
<path d="M412.4 184.0 Q404.7 187.6 397.8 192.2 Q390.8 196.8 383.8 198.4 L376.8 200.0" fill="none" stroke="#f7e39a" stroke-width="1.2" stroke-linejoin="round"/>
<path d="M83.1 113.7 Q93.5 122.5 102.9 124.6 Q112.2 126.7 122.0 127.0 L131.7 127.4" fill="none" stroke="#f7e39a" stroke-width="1.2" stroke-linejoin="round"/>
<path d="M5.5 80.1 Q17.0 70.5 24.2 70.3 Q31.4 70.0 37.9 70.9 L44.4 71.7" fill="none" stroke="#f7e39a" stroke-width="1.2" stroke-linejoin="round"/>
<path d="M258.9 269.3 Q278.0 274.4 281.9 275.2 Q285.8 276.0 290.9 278.2 Q296.1 280.3 300.9 284.6 L305.8 288.9" fill="none" stroke="#f7e39a" stroke-width="1.2" stroke-linejoin="round"/>
<path d="M144.8 276.7 Q145.3 260.1 140.8 251.2 Q136.3 242.4 135.3 233.6 Q134.2 224.8 132.8 216.4 L131.4 208.0" fill="none" stroke="#f7e39a" stroke-width="1.2" stroke-linejoin="round"/>
<path d="M400.1 118.7 Q400.3 109.3 395.9 103.7 Q391.6 98.1 384.7 94.3 Q377.8 90.5 373.0 83.2 L368.3 75.8" fill="none" stroke="#f7e39a" stroke-width="1.2" stroke-linejoin="round"/>
<path d="M128.0 203.9 Q113.7 201.4 105.3 201.9 Q96.9 202.3 89.6 205.8 Q82.4 209.2 75.0 209.5 L67.7 209.8" fill="none" stroke="#f7e39a" stroke-width="1.2" stroke-linejoin="round"/>
<path d="M18.0 227.3 Q22.8 238.0 29.5 245.0 L36.3 252.0" fill="none" stroke="#f7e39a" stroke-width="1.2" stroke-linejoin="round"/>
<path d="M247.5 242.1 Q266.9 243.4 273.8 245.1 L280.6 246.9" fill="none" stroke="#f7e39a" stroke-width="1.2" stroke-linejoin="round"/>
<path d="M110.3 164.1 Q124.3 151.3 132.2 150.1 Q140.0 148.9 147.9 149.6 Q155.8 150.4 164.1 146.7 L172.3 143.1" fill="none" stroke="#f7e39a" stroke-width="1.2" stroke-linejoin="round"/>
<path d="M206.0 213.9 Q214.0 214.0 221.7 217.8 Q229.4 221.5 235.7 225.4 L242.1 229.3" fill="none" stroke="#f7e39a" stroke-width="1.2" stroke-linejoin="round"/>
<path d="M342.7 183.5 Q354.5 192.8 361.7 198.8 L369.0 204.8" fill="none" stroke="#f7e39a" stroke-width="1.2" stroke-linejoin="round"/>
<path d="M173.1 249.4 Q189.4 253.0 193.9 250.9 Q198.4 248.7 205.3 242.9 L212.2 237.0" fill="none" stroke="#f7e39a" stroke-width="1.2" stroke-linejoin="round"/>
<path d="M40.8 37.9 Q54.5 31.0 60.5 27.2 Q66.4 23.4 73.5 22.4 Q80.6 21.5 88.1 20.9 L95.6 20.2" fill="none" stroke="#f7e39a" stroke-width="1.2" stroke-linejoin="round"/>
<path d="M402.0 233.3 Q408.4 226.8 415.3 221.2 Q422.2 215.7 430.6 214.0 L438.9 212.3" fill="none" stroke="#f7e39a" stroke-width="1.2" stroke-linejoin="round"/>
<path d="M40.9 120.8 Q59.1 128.6 62.4 131.8 Q65.6 135.1 71.3 137.6 Q77.0 140.2 80.8 145.8 L84.6 151.3" fill="none" stroke="#f7e39a" stroke-width="1.2" stroke-linejoin="round"/>
<path d="M60.5 157.3 Q59.1 176.9 61.4 181.1 L63.6 185.3" fill="none" stroke="#f7e39a" stroke-width="1.2" stroke-linejoin="round"/>
<path d="M372.0 11.4 Q359.9 17.0 355.2 25.4 L350.6 33.8" fill="none" stroke="#f7e39a" stroke-width="1.2" stroke-linejoin="round"/>
<path d="M107.4 214.5 Q99.2 218.5 93.3 222.1 Q87.5 225.7 81.1 226.6 Q74.8 227.6 68.5 227.0 L62.3 226.5" fill="none" stroke="#f7e39a" stroke-width="1.2" stroke-linejoin="round"/>
<path d="M313.8 43.0 Q316.5 24.9 320.7 17.9 L324.9 10.8" fill="none" stroke="#f7e39a" stroke-width="1.2" stroke-linejoin="round"/>
<path d="M36.8 212.8 Q43.8 203.0 48.2 194.4 Q52.6 185.8 57.0 181.0 Q61.4 176.3 62.7 170.8 L64.0 165.3" fill="none" stroke="#f7e39a" stroke-width="1.2" stroke-linejoin="round"/>
<path d="M230.1 171.6 Q240.3 155.1 243.7 147.4 Q247.1 139.7 250.5 134.2 Q253.9 128.8 255.5 124.1 L257.1 119.5" fill="none" stroke="#f7e39a" stroke-width="1.2" stroke-linejoin="round"/>
<path d="M-5.2 92.1 Q-15.5 101.3 -19.4 103.0 L-23.4 104.8" fill="none" stroke="#f7e39a" stroke-width="1.2" stroke-linejoin="round"/>
<path d="M172.6 220.1 Q187.9 219.5 197.0 215.4 L206.0 211.3" fill="none" stroke="#f7e39a" stroke-width="1.2" stroke-linejoin="round"/>
<path d="M177.8 259.4 Q172.1 272.5 171.4 282.1 L170.6 291.8" fill="none" stroke="#f7e39a" stroke-width="1.2" stroke-linejoin="round"/>
<path d="M78.8 55.0 Q77.0 64.6 72.9 72.0 Q68.7 79.4 64.3 83.5 Q59.8 87.5 53.9 92.3 L48.0 97.0" fill="none" stroke="#f7e39a" stroke-width="1.2" stroke-linejoin="round"/>
<path d="M365.7 5.6 Q352.4 15.9 350.9 20.5 Q349.5 25.0 350.8 34.1 L352.0 43.3" fill="none" stroke="#f7e39a" stroke-width="1.2" stroke-linejoin="round"/>
<path d="M115.6 28.2 Q123.0 37.0 124.6 45.8 Q126.3 54.5 122.4 63.7 Q118.5 72.9 118.6 80.3 L118.7 87.7" fill="none" stroke="#f7e39a" stroke-width="1.2" stroke-linejoin="round"/>
<path d="M165.4 172.0 Q149.5 172.4 142.6 176.2 Q135.7 179.9 133.0 186.1 Q130.2 192.2 128.0 199.8 L125.8 207.4" fill="none" stroke="#f7e39a" stroke-width="1.2" stroke-linejoin="round"/>
<path d="M45.8 -5.9 Q39.6 2.9 32.3 6.1 Q25.0 9.3 22.3 12.5 Q19.5 15.6 12.4 18.0 L5.3 20.3" fill="none" stroke="#f7e39a" stroke-width="1.2" stroke-linejoin="round"/>
<path d="M38.4 290.9 Q32.2 281.8 29.5 277.5 L26.8 273.3" fill="none" stroke="#f7e39a" stroke-width="1.2" stroke-linejoin="round"/>
<path d="M260.7 122.1 Q270.6 105.6 279.2 102.3 L287.8 99.1" fill="none" stroke="#f7e39a" stroke-width="1.2" stroke-linejoin="round"/>
<path d="M43.4 213.8 Q37.3 222.6 35.5 230.2 Q33.7 237.9 34.0 243.1 L34.3 248.3" fill="none" stroke="#f7e39a" stroke-width="1.2" stroke-linejoin="round"/>
<path d="M27.8 43.7 Q26.6 62.5 28.7 66.0 L30.8 69.6" fill="none" stroke="#f7e39a" stroke-width="1.2" stroke-linejoin="round"/>
<path d="M70.1 1.8 Q58.8 -2.1 51.5 -4.5 Q44.1 -7.0 35.2 -4.5 Q26.4 -2.0 19.2 2.8 L12.1 7.7" fill="none" stroke="#f7e39a" stroke-width="1.2" stroke-linejoin="round"/>
<path d="M48.7 18.5 Q42.2 36.7 36.2 42.2 L30.1 47.7" fill="none" stroke="#f7e39a" stroke-width="1.2" stroke-linejoin="round"/>
<path d="M184.6 71.1 Q176.6 68.1 168.9 70.3 Q161.2 72.5 157.2 78.3 Q153.2 84.1 146.8 90.5 L140.5 97.0" fill="none" stroke="#f7e39a" stroke-width="1.2" stroke-linejoin="round"/>
<path d="M-9.7 112.2 Q-16.7 121.9 -23.4 124.4 Q-30.1 126.8 -39.6 125.5 Q-49.0 124.1 -58.5 122.8 L-68.0 121.4" fill="none" stroke="#f7e39a" stroke-width="1.2" stroke-linejoin="round"/>
<path d="M68.7 101.1 Q65.6 117.2 66.2 127.0 Q66.9 136.8 66.3 142.7 L65.7 148.5" fill="none" stroke="#f7e39a" stroke-width="1.2" stroke-linejoin="round"/>
<path d="M337.5 58.1 Q349.1 72.5 354.5 77.5 L360.0 82.5" fill="none" stroke="#f7e39a" stroke-width="1.2" stroke-linejoin="round"/>
<path d="M295.4 264.4 Q291.9 273.6 292.3 281.8 L292.7 289.9" fill="none" stroke="#f7e39a" stroke-width="1.2" stroke-linejoin="round"/>
<path d="M229.5 126.4 Q219.8 118.2 211.1 117.0 Q202.3 115.8 199.1 113.1 L195.9 110.4" fill="none" stroke="#f7e39a" stroke-width="1.2" stroke-linejoin="round"/>
<path d="M346.6 43.5 Q349.7 24.0 351.5 14.5 L353.3 4.9" fill="none" stroke="#f7e39a" stroke-width="1.2" stroke-linejoin="round"/>
<path d="M80.3 37.0 Q97.6 44.3 104.9 50.8 Q112.2 57.3 113.1 62.2 Q113.9 67.0 113.4 71.1 L112.8 75.2" fill="none" stroke="#f7e39a" stroke-width="1.2" stroke-linejoin="round"/>
<path d="M74.8 153.1 Q70.3 161.8 66.7 163.8 L63.0 165.8" fill="none" stroke="#f7e39a" stroke-width="1.2" stroke-linejoin="round"/>
<path d="M373.3 172.3 Q357.0 167.1 352.1 162.5 L347.2 157.9" fill="none" stroke="#f7e39a" stroke-width="1.2" stroke-linejoin="round"/>
<path d="M229.5 12.7 Q215.0 10.5 210.5 10.4 Q205.9 10.2 200.4 12.2 Q194.8 14.2 190.8 18.4 L186.9 22.6" fill="none" stroke="#f7e39a" stroke-width="1.2" stroke-linejoin="round"/>
<path d="M376.5 49.1 Q366.1 64.6 362.6 68.3 Q359.0 72.1 357.7 76.1 Q356.5 80.2 351.3 87.1 L346.0 94.1" fill="none" stroke="#f7e39a" stroke-width="1.2" stroke-linejoin="round"/>
<path d="M155.0 58.0 Q145.9 56.2 138.4 57.6 L130.9 58.9" fill="none" stroke="#f7e39a" stroke-width="1.2" stroke-linejoin="round"/>
<path d="M41.5 101.1 Q42.9 110.8 45.1 116.0 L47.4 121.1" fill="none" stroke="#f7e39a" stroke-width="1.2" stroke-linejoin="round"/>
<path d="M129.2 138.3 Q138.2 124.2 141.4 119.6 L144.7 115.1" fill="none" stroke="#f7e39a" stroke-width="1.2" stroke-linejoin="round"/>
<path d="M75.8 254.4 Q65.8 240.1 62.9 234.4 Q59.9 228.6 61.0 223.7 Q62.0 218.7 59.9 214.5 L57.7 210.3" fill="none" stroke="#f7e39a" stroke-width="1.2" stroke-linejoin="round"/>
<path d="M294.9 17.9 Q281.9 5.0 273.2 2.0 L264.5 -1.1" fill="none" stroke="#f7e39a" stroke-width="1.2" stroke-linejoin="round"/>
<path d="M46.3 136.9 Q32.8 143.0 26.7 142.9 Q20.7 142.8 12.5 144.0 L4.4 145.3" fill="none" stroke="#f7e39a" stroke-width="1.2" stroke-linejoin="round"/>
<path d="M326.3 200.6 Q326.2 213.2 330.2 220.4 Q334.2 227.6 339.0 234.1 L343.8 240.7" fill="none" stroke="#f7e39a" stroke-width="1.2" stroke-linejoin="round"/>
<path d="M395.7 106.9 Q387.8 124.6 380.2 128.4 Q372.6 132.2 364.3 132.4 Q356.1 132.7 351.8 136.3 L347.5 140.0" fill="none" stroke="#f7e39a" stroke-width="1.2" stroke-linejoin="round"/>
<path d="M94.7 -3.4 Q86.9 -8.6 81.6 -13.0 Q76.3 -17.4 73.7 -23.8 Q71.1 -30.3 71.4 -36.8 L71.8 -43.3" fill="none" stroke="#f7e39a" stroke-width="1.2" stroke-linejoin="round"/>
<path d="M196.5 -8.8 Q207.1 7.7 213.0 10.4 Q218.9 13.0 223.6 19.6 L228.3 26.2" fill="none" stroke="#f7e39a" stroke-width="1.2" stroke-linejoin="round"/>
<path d="M146.3 241.5 Q137.1 224.4 136.3 220.4 Q135.5 216.3 136.3 211.7 Q137.2 207.1 140.5 198.1 L143.8 189.2" fill="none" stroke="#f7e39a" stroke-width="1.2" stroke-linejoin="round"/>
<path d="M402.3 97.4 Q384.2 106.0 377.3 111.3 Q370.4 116.7 364.3 117.9 Q358.1 119.1 352.8 119.4 L347.4 119.8" fill="none" stroke="#f7e39a" stroke-width="1.2" stroke-linejoin="round"/>
<path d="M155.9 123.5 Q151.1 116.9 142.8 113.3 Q134.5 109.8 129.0 103.9 Q123.5 98.0 117.6 91.1 L111.8 84.2" fill="none" stroke="#f7e39a" stroke-width="1.2" stroke-linejoin="round"/>
<path d="M47.4 241.2 Q56.4 231.5 57.2 226.2 Q58.0 221.0 56.0 217.2 L54.1 213.3" fill="none" stroke="#f7e39a" stroke-width="1.2" stroke-linejoin="round"/>
<path d="M148.8 104.8 Q141.5 112.0 139.9 118.8 L138.2 125.6" fill="none" stroke="#f7e39a" stroke-width="1.2" stroke-linejoin="round"/>
<path d="M107.4 290.0 Q102.8 277.5 104.3 269.8 L105.9 262.2" fill="none" stroke="#f7e39a" stroke-width="1.2" stroke-linejoin="round"/>
<path d="M151.3 285.7 Q151.5 277.3 148.2 269.2 Q144.8 261.1 139.9 253.1 L134.9 245.1" fill="none" stroke="#f7e39a" stroke-width="1.2" stroke-linejoin="round"/>
<path d="M21.5 275.1 Q12.6 274.1 6.7 273.4 Q0.9 272.7 -6.8 271.0 L-14.4 269.3" fill="none" stroke="#f7e39a" stroke-width="1.2" stroke-linejoin="round"/>
<path d="M304.3 132.7 Q312.5 130.7 318.4 128.9 Q324.2 127.2 328.1 121.7 L332.0 116.1" fill="none" stroke="#f7e39a" stroke-width="1.2" stroke-linejoin="round"/>
<ellipse cx="129.4" cy="66.2" rx="1.8" ry="1.6" fill="#c9dfae"/>
<ellipse cx="24.6" cy="266.3" rx="2.5" ry="1.9" fill="#c9dfae"/>
<ellipse cx="298.0" cy="167.3" rx="1.4" ry="1.4" fill="#c9dfae"/>
<ellipse cx="120.0" cy="78.7" rx="1.7" ry="1.1" fill="#c9dfae"/>
<ellipse cx="104.0" cy="281.4" rx="2.2" ry="1.9" fill="#c9dfae"/>
<ellipse cx="450.5" cy="94.1" rx="2.3" ry="2.0" fill="#c9dfae"/>
<ellipse cx="404.1" cy="129.3" rx="2.3" ry="1.6" fill="#c9dfae"/>
<ellipse cx="178.3" cy="98.6" rx="2.2" ry="2.8" fill="#c9dfae"/>
<ellipse cx="61.3" cy="117.3" rx="1.3" ry="0.8" fill="#c9dfae"/>
<ellipse cx="58.8" cy="21.1" rx="1.5" ry="1.4" fill="#c9dfae"/>
<ellipse cx="408.9" cy="186.4" rx="2.1" ry="1.9" fill="#c9dfae"/>
<ellipse cx="145.4" cy="117.8" rx="1.3" ry="0.8" fill="#c9dfae"/>
<ellipse cx="124.5" cy="265.5" rx="1.1" ry="1.1" fill="#c9dfae"/>
<ellipse cx="104.8" cy="218.1" rx="1.1" ry="1.1" fill="#c9dfae"/>
<ellipse cx="327.7" cy="132.2" rx="1.2" ry="1.6" fill="#c9dfae"/>
<ellipse cx="8.7" cy="265.0" rx="2.2" ry="2.9" fill="#c9dfae"/>
<ellipse cx="391.2" cy="105.7" rx="1.9" ry="1.9" fill="#c9dfae"/>
<ellipse cx="264.4" cy="108.6" rx="2.3" ry="1.9" fill="#c9dfae"/>
<ellipse cx="253.7" cy="19.5" rx="1.1" ry="1.4" fill="#c9dfae"/>
<ellipse cx="161.2" cy="107.1" rx="2.5" ry="2.9" fill="#c9dfae"/>
<ellipse cx="70.3" cy="155.3" rx="1.7" ry="1.9" fill="#c9dfae"/>
<ellipse cx="123.2" cy="78.8" rx="2.4" ry="2.6" fill="#c9dfae"/>
<ellipse cx="249.0" cy="197.8" rx="2.1" ry="1.6" fill="#c9dfae"/>
<ellipse cx="353.9" cy="138.1" rx="1.2" ry="1.0" fill="#c9dfae"/>
<ellipse cx="447.8" cy="241.7" rx="2.4" ry="2.4" fill="#c9dfae"/>
<ellipse cx="287.6" cy="113.3" rx="2.1" ry="2.2" fill="#c9dfae"/>
<ellipse cx="161.6" cy="279.5" rx="1.8" ry="1.1" fill="#c9dfae"/>
<ellipse cx="368.1" cy="27.4" rx="1.4" ry="1.4" fill="#c9dfae"/>
<ellipse cx="95.7" cy="128.5" rx="1.7" ry="1.7" fill="#c9dfae"/>
<ellipse cx="294.8" cy="196.0" rx="1.1" ry="0.8" fill="#c9dfae"/>
<ellipse cx="52.7" cy="95.2" rx="1.7" ry="2.2" fill="#c9dfae"/>
<ellipse cx="6.4" cy="231.7" rx="1.2" ry="1.5" fill="#c9dfae"/>
<ellipse cx="383.5" cy="282.0" rx="1.9" ry="1.2" fill="#c9dfae"/>
<ellipse cx="129.9" cy="124.6" rx="2.0" ry="2.8" fill="#c9dfae"/>
<ellipse cx="396.2" cy="18.0" rx="1.2" ry="1.3" fill="#c9dfae"/>
<ellipse cx="93.6" cy="166.9" rx="1.8" ry="1.8" fill="#c9dfae"/>
<ellipse cx="157.8" cy="260.3" rx="1.4" ry="1.3" fill="#c9dfae"/>
<ellipse cx="73.1" cy="82.9" rx="1.2" ry="1.3" fill="#c9dfae"/>
<ellipse cx="9.3" cy="69.4" rx="2.2" ry="2.8" fill="#c9dfae"/>
<ellipse cx="153.5" cy="210.1" rx="2.2" ry="2.5" fill="#c9dfae"/>
<ellipse cx="280.7" cy="215.6" rx="1.5" ry="1.3" fill="#c9dfae"/>
<ellipse cx="115.9" cy="66.0" rx="1.8" ry="1.8" fill="#c9dfae"/>
<ellipse cx="86.2" cy="24.4" rx="1.0" ry="0.8" fill="#c9dfae"/>
<ellipse cx="70.6" cy="177.6" rx="2.2" ry="2.3" fill="#c9dfae"/>
<ellipse cx="291.1" cy="120.5" rx="1.1" ry="1.3" fill="#c9dfae"/>
<ellipse cx="346.1" cy="42.2" rx="1.5" ry="1.7" fill="#c9dfae"/>
<ellipse cx="319.0" cy="46.9" rx="1.6" ry="1.4" fill="#c9dfae"/>
<ellipse cx="246.7" cy="234.6" rx="1.2" ry="1.1" fill="#c9dfae"/>
<ellipse cx="417.0" cy="50.8" rx="1.3" ry="1.6" fill="#c9dfae"/>
<ellipse cx="282.0" cy="136.1" rx="1.7" ry="1.1" fill="#c9dfae"/>
<ellipse cx="289.7" cy="75.6" rx="1.7" ry="2.2" fill="#c9dfae"/>
<ellipse cx="224.1" cy="112.9" rx="1.5" ry="1.3" fill="#c9dfae"/>
<ellipse cx="279.3" cy="204.9" rx="1.2" ry="0.7" fill="#c9dfae"/>
<ellipse cx="178.5" cy="47.3" rx="1.9" ry="1.4" fill="#c9dfae"/>
<ellipse cx="227.9" cy="135.7" rx="2.5" ry="2.1" fill="#c9dfae"/>
<ellipse cx="118.5" cy="96.5" rx="2.0" ry="1.6" fill="#c9dfae"/>
<ellipse cx="109.3" cy="203.4" rx="1.8" ry="1.2" fill="#c9dfae"/>
<ellipse cx="382.6" cy="36.3" rx="1.4" ry="1.5" fill="#c9dfae"/>
<ellipse cx="206.4" cy="219.0" rx="1.2" ry="1.4" fill="#c9dfae"/>
<ellipse cx="80.9" cy="33.3" rx="2.0" ry="2.5" fill="#c9dfae"/>
<ellipse cx="48.8" cy="9.5" rx="1.3" ry="1.4" fill="#c9dfae"/>
<ellipse cx="14.3" cy="271.8" rx="1.0" ry="1.2" fill="#c9dfae"/>
<ellipse cx="363.8" cy="109.9" rx="2.2" ry="1.6" fill="#c9dfae"/>
<ellipse cx="350.3" cy="164.4" rx="2.3" ry="2.8" fill="#c9dfae"/>
<ellipse cx="355.7" cy="247.1" rx="1.4" ry="0.9" fill="#c9dfae"/>
<ellipse cx="77.4" cy="213.8" rx="1.8" ry="1.8" fill="#c9dfae"/>
<ellipse cx="213.9" cy="7.2" rx="2.4" ry="2.5" fill="#c9dfae"/>
<ellipse cx="264.5" cy="141.4" rx="2.3" ry="2.3" fill="#c9dfae"/>
<ellipse cx="243.6" cy="228.4" rx="1.2" ry="1.5" fill="#c9dfae"/>
<ellipse cx="282.3" cy="95.1" rx="1.2" ry="1.2" fill="#c9dfae"/>
<ellipse cx="132.7" cy="0.5" rx="2.2" ry="2.7" fill="#c9dfae"/>
<ellipse cx="406.6" cy="218.1" rx="1.6" ry="2.1" fill="#c9dfae"/>
<ellipse cx="108.6" cy="73.7" rx="1.7" ry="1.9" fill="#c9dfae"/>
<ellipse cx="44.8" cy="16.5" rx="2.4" ry="1.5" fill="#c9dfae"/>
<ellipse cx="335.6" cy="134.1" rx="2.4" ry="3.1" fill="#c9dfae"/>
<ellipse cx="209.8" cy="156.4" rx="2.0" ry="1.7" fill="#c9dfae"/>
<ellipse cx="8.8" cy="283.4" rx="1.8" ry="2.3" fill="#c9dfae"/>
<ellipse cx="243.3" cy="21.7" rx="1.2" ry="0.9" fill="#c9dfae"/>
<ellipse cx="436.3" cy="233.3" rx="1.4" ry="1.4" fill="#c9dfae"/>
<ellipse cx="437.6" cy="144.5" rx="1.5" ry="1.5" fill="#c9dfae"/>
<ellipse cx="76.2" cy="162.9" rx="1.1" ry="1.1" fill="#c9dfae"/>
<ellipse cx="50.2" cy="11.2" rx="2.1" ry="2.1" fill="#c9dfae"/>
<ellipse cx="72.2" cy="114.0" rx="2.3" ry="2.1" fill="#c9dfae"/>
<ellipse cx="123.4" cy="137.3" rx="2.3" ry="2.6" fill="#c9dfae"/>
<ellipse cx="214.1" cy="179.5" rx="1.5" ry="2.1" fill="#c9dfae"/>
<ellipse cx="123.1" cy="62.5" rx="1.7" ry="2.1" fill="#c9dfae"/>
<ellipse cx="349.0" cy="188.9" rx="1.0" ry="1.2" fill="#c9dfae"/>
<ellipse cx="412.1" cy="36.0" rx="1.3" ry="1.0" fill="#c9dfae"/>
<ellipse cx="58.8" cy="41.6" rx="1.8" ry="2.0" fill="#c9dfae"/>
<ellipse cx="209.9" cy="154.5" rx="2.0" ry="2.6" fill="#c9dfae"/>
<path d="M428.0 0.0 L428.0 35.0 L459.0 35.0 L459.0 121.0 L472.0 115.0 L484.0 109.0 L497.0 106.0 L504.0 117.0 L512.0 127.0 L518.0 136.0 L504.0 147.0 L483.0 160.0 L447.0 170.0 L418.0 180.0 L422.0 189.0 L418.0 197.0 L402.0 214.0 L391.0 226.0 L375.0 245.0 L364.0 264.0 L362.0 286.0 L612.0 286.0 L612.0 0.0 Z" fill="#a5bedd"/>
<path d="M0.0 170.0 Q23.0 173.0 31.0 175.5 Q39.0 178.0 51.5 176.5 Q64.0 175.0 72.0 175.5 Q80.0 176.0 87.0 182.0 Q94.0 188.0 104.5 190.0 Q115.0 192.0 140.5 189.5 Q166.0 187.0 171.0 188.5 Q176.0 190.0 187.0 202.5 Q198.0 215.0 210.0 219.5 L222.0 224.0" fill="none" stroke="#f3b240" stroke-width="2.8" stroke-linejoin="round" stroke-linecap="round"/>
<path d="M176.0 190.0 Q205.0 170.0 214.0 166.0 Q223.0 162.0 235.0 153.0 L247.0 144.0" fill="none" stroke="#f3b240" stroke-width="2.8" stroke-linejoin="round" stroke-linecap="round"/>
<path d="M172.0 190.0 Q152.0 215.0 145.5 229.5 Q139.0 244.0 141.0 256.0 Q143.0 268.0 146.5 277.5 L150.0 287.0" fill="none" stroke="#f3b240" stroke-width="2.8" stroke-linejoin="round" stroke-linecap="round"/>
<path d="M96.0 196.0 Q97.0 211.0 89.5 221.0 Q82.0 231.0 78.0 237.5 Q74.0 244.0 70.0 249.0 Q66.0 254.0 64.0 263.0 Q62.0 272.0 65.5 279.5 L69.0 287.0" fill="none" stroke="#f3b240" stroke-width="2.8" stroke-linejoin="round" stroke-linecap="round"/>
<path d="M98.0 287.0 Q123.0 278.0 133.0 273.0 L143.0 268.0" fill="none" stroke="#f3b240" stroke-width="2.8" stroke-linejoin="round" stroke-linecap="round"/>
<path d="M239.0 287.0 Q264.0 281.0 285.5 279.5 Q307.0 278.0 334.5 275.5 L362.0 273.0" fill="none" stroke="#f3b240" stroke-width="2.8" stroke-linejoin="round" stroke-linecap="round"/>
<path d="M237.0 144.0 Q254.0 179.0 264.5 193.0 Q275.0 207.0 271.5 218.0 Q268.0 229.0 265.0 250.5 Q262.0 272.0 263.0 279.5 L264.0 287.0" fill="none" stroke="#f3b240" stroke-width="2.8" stroke-linejoin="round" stroke-linecap="round"/>
<path d="M275.0 209.0 Q301.0 203.0 314.5 198.5 Q328.0 194.0 331.0 191.0 Q334.0 188.0 348.0 188.5 Q362.0 189.0 367.0 187.0 Q372.0 185.0 387.0 172.0 L402.0 159.0" fill="none" stroke="#f3b240" stroke-width="2.8" stroke-linejoin="round" stroke-linecap="round"/>
<path d="M316.0 200.0 Q310.0 186.0 308.0 172.5 L306.0 159.0" fill="none" stroke="#f3b240" stroke-width="2.8" stroke-linejoin="round" stroke-linecap="round"/>
<path d="M350.0 228.0 Q354.0 235.0 351.5 241.0 Q349.0 247.0 348.0 253.0 Q347.0 259.0 342.5 262.0 Q338.0 265.0 336.0 276.0 L334.0 287.0" fill="none" stroke="#f3b240" stroke-width="2.8" stroke-linejoin="round" stroke-linecap="round"/>
<path d="M192.0 0.0 Q188.0 9.0 183.5 16.0 Q179.0 23.0 179.5 29.0 L180.0 35.0" fill="none" stroke="#f3b240" stroke-width="2.8" stroke-linejoin="round" stroke-linecap="round"/>
<path d="M226.0 0.0 Q233.0 15.0 237.5 19.0 Q242.0 23.0 246.5 29.0 L251.0 35.0" fill="none" stroke="#f3b240" stroke-width="2.8" stroke-linejoin="round" stroke-linecap="round"/>
<path d="M272.0 238.0 Q294.0 242.0 308.0 248.0 L322.0 254.0" fill="none" stroke="#f3b240" stroke-width="2.8" stroke-linejoin="round" stroke-linecap="round"/>
<path d="M362.0 29.0 Q372.0 19.0 377.0 9.5 L382.0 0.0" fill="none" stroke="#f3b240" stroke-width="2.8" stroke-linejoin="round" stroke-linecap="round"/>
<path d="M0.0 94.0 L162.0 100.0" fill="none" stroke="#9a9a9a" stroke-width="1.2" stroke-dasharray="7 4"/>
<path d="M428.0 16.0 L458.0 16.0" fill="none" stroke="#9a9a9a" stroke-width="1.2" stroke-dasharray="7 4"/>
<path d="M262.0 126.0 L550.0 126.0 L504.0 177.0 L207.0 179.0 Z" fill="#2e3846" opacity=".62" filter="url(#blur6)"/>
<text x="153.5" y="22.5" font-size="11.5" style="" fill="#444" stroke="#fff" stroke-width="2.5" stroke-opacity=".85" paint-order="stroke" font-family="Liberation Sans" text-anchor="start">Merrimack</text>
<text x="227.0" y="17.0" font-size="11.5" style="" fill="#444" stroke="#fff" stroke-width="2.5" stroke-opacity=".85" paint-order="stroke" font-family="Liberation Sans" text-anchor="start">Derry</text>
<text x="381.5" y="9.0" font-size="11.5" style="" fill="#444" stroke="#fff" stroke-width="2.5" stroke-opacity=".85" paint-order="stroke" font-family="Liberation Sans" text-anchor="start">Seabrook</text>
<text x="358.0" y="27.0" font-size="11.5" style="" fill="#444" stroke="#fff" stroke-width="2.5" stroke-opacity=".85" paint-order="stroke" font-family="Liberation Sans" text-anchor="start">Amesbury</text>
<text x="304.0" y="37.0" font-size="11.5" style="" fill="#444" stroke="#fff" stroke-width="2.5" stroke-opacity=".85" paint-order="stroke" font-family="Liberation Sans" text-anchor="start">Plaistow</text>
<text x="-4.0" y="82.0" font-size="11.5" style="" fill="#444" stroke="#fff" stroke-width="2.5" stroke-opacity=".85" paint-order="stroke" font-family="Liberation Sans" text-anchor="start">ge</text>
<text x="17.5" y="82.0" font-size="11.5" style="" fill="#444" stroke="#fff" stroke-width="2.5" stroke-opacity=".85" paint-order="stroke" font-family="Liberation Sans" text-anchor="start">New Ipswich</text>
<text x="-2.0" y="112.0" font-size="11.5" style="" fill="#444" stroke="#fff" stroke-width="2.5" stroke-opacity=".85" paint-order="stroke" font-family="Liberation Sans" text-anchor="start">on</text>
<text x="-2.0" y="137.0" font-size="11.5" style="" fill="#444" stroke="#fff" stroke-width="2.5" stroke-opacity=".85" paint-order="stroke" font-family="Liberation Sans" text-anchor="start">Ashburnham</text>
<text x="42.0" y="165.0" font-size="12" style="" fill="#444" stroke="#fff" stroke-width="2.5" stroke-opacity=".85" paint-order="stroke" font-family="Liberation Sans" text-anchor="start">Fitchburg</text>
<text x="-2.0" y="168.0" font-size="11.5" style="" fill="#444" stroke="#fff" stroke-width="2.5" stroke-opacity=".85" paint-order="stroke" font-family="Liberation Sans" text-anchor="start">ner</text>
<text x="53.0" y="193.5" font-size="12" style="" fill="#444" stroke="#fff" stroke-width="2.5" stroke-opacity=".85" paint-order="stroke" font-family="Liberation Sans" text-anchor="start">Leominster</text>
<text x="-2.0" y="218.0" font-size="11.5" style="" fill="#444" stroke="#fff" stroke-width="2.5" stroke-opacity=".85" paint-order="stroke" font-family="Liberation Sans" text-anchor="start">dston</text>
<text x="176.0" y="166.0" font-size="12" style="" fill="#444" stroke="#fff" stroke-width="2.5" stroke-opacity=".85" paint-order="stroke" font-family="Liberation Sans" text-anchor="start">Westford</text>
<text x="240.0" y="175.0" font-size="12.5" style="" fill="#444" stroke="#fff" stroke-width="2.5" stroke-opacity=".85" paint-order="stroke" font-family="Liberation Sans" text-anchor="start">Billerica</text>
<text x="204.0" y="219.0" font-size="12" style="" fill="#444" stroke="#fff" stroke-width="2.5" stroke-opacity=".85" paint-order="stroke" font-family="Liberation Sans" text-anchor="start">West</text>
<text x="195.0" y="231.5" font-size="12" style="" fill="#444" stroke="#fff" stroke-width="2.5" stroke-opacity=".85" paint-order="stroke" font-family="Liberation Sans" text-anchor="start">Concord</text>
<text x="92.0" y="245.5" font-size="12" style="" fill="#444" stroke="#fff" stroke-width="2.5" stroke-opacity=".85" paint-order="stroke" font-family="Liberation Sans" text-anchor="start">Clinton</text>
<text x="134.5" y="258.0" font-size="11.5" style="" fill="#444" stroke="#fff" stroke-width="2.5" stroke-opacity=".85" paint-order="stroke" font-family="Liberation Sans" text-anchor="start">Hudson</text>
<text x="124.0" y="280.5" font-size="12" style="" fill="#444" stroke="#fff" stroke-width="2.5" stroke-opacity=".85" paint-order="stroke" font-family="Liberation Sans" text-anchor="start">Marlborough</text>
<text x="248.0" y="266.0" font-size="13" style="" fill="#444" stroke="#fff" stroke-width="2.5" stroke-opacity=".85" paint-order="stroke" font-family="Liberation Sans" text-anchor="start">Waltham</text>
<text x="262.0" y="285.5" font-size="12.5" style="" fill="#444" stroke="#fff" stroke-width="2.5" stroke-opacity=".85" paint-order="stroke" font-family="Liberation Sans" text-anchor="start">Newton</text>
<text x="285.0" y="215.5" font-size="12.5" style="" fill="#444" stroke="#fff" stroke-width="2.5" stroke-opacity=".85" paint-order="stroke" font-family="Liberation Sans" text-anchor="start">Woburn</text>
<text x="296.5" y="246.0" font-size="13" style="" fill="#444" stroke="#fff" stroke-width="2.5" stroke-opacity=".85" paint-order="stroke" font-family="Liberation Sans" text-anchor="start">Medford</text>
<text x="315.0" y="275.0" font-size="14" style="" fill="#444" stroke="#fff" stroke-width="2.5" stroke-opacity=".85" paint-order="stroke" font-family="Liberation Sans" text-anchor="start">Boston</text>
<text x="476.5" y="127.5" font-size="11.5" style="" fill="#444" stroke="#fff" stroke-width="2.5" stroke-opacity=".85" paint-order="stroke" font-family="Liberation Sans" text-anchor="start">Rockport</text>
<text x="455.0" y="147.5" font-size="12" style="" fill="#444" stroke="#fff" stroke-width="2.5" stroke-opacity=".85" paint-order="stroke" font-family="Liberation Sans" text-anchor="start">Gloucester</text>
<text x="384.5" y="176.0" font-size="12" style="" fill="#444" stroke="#fff" stroke-width="2.5" stroke-opacity=".85" paint-order="stroke" font-family="Liberation Sans" text-anchor="start">Beverly</text>
<text x="381.5" y="196.0" font-size="12" style="" fill="#444" stroke="#fff" stroke-width="2.5" stroke-opacity=".85" paint-order="stroke" font-family="Liberation Sans" text-anchor="start">Salem</text>
<text x="364.0" y="222.0" font-size="12.5" style="" fill="#444" stroke="#fff" stroke-width="2.5" stroke-opacity=".85" paint-order="stroke" font-family="Liberation Sans" text-anchor="start">Lynn</text>
<text x="89.0" y="112.0" font-size="11.5" style="font-style:italic;" fill="#3f6f3f" stroke="#fff" stroke-width="2.5" stroke-opacity=".85" paint-order="stroke" font-family="Liberation Sans" text-anchor="start">Willard Brook</text>
<text x="89.0" y="125.5" font-size="11.5" style="font-style:italic;" fill="#3f6f3f" stroke="#fff" stroke-width="2.5" stroke-opacity=".85" paint-order="stroke" font-family="Liberation Sans" text-anchor="start">State Forest</text>
<path d="M78.0 109.0 l-4 6 h2 l-3 4 h4 v3 h2 v-3 h4 l-3 -4 h2z" fill="#3f6f3f"/>
<rect x="31.0" y="24.0" width="22.0" height="12.0" rx="5" fill="#fff" stroke="#333" stroke-width="1"/><text x="42.0" y="33.3" font-size="9.5" font-family="Liberation Sans" text-anchor="middle" fill="#222">101</text>
<rect x="108.5" y="75.5" width="17.0" height="11.5" rx="5" fill="#fff" stroke="#333" stroke-width="1"/><text x="117.0" y="84.5" font-size="9.5" font-family="Liberation Sans" text-anchor="middle" fill="#222">13</text>
<rect x="23.0" y="174.0" width="16.5" height="9.0" rx="5" fill="#fff" stroke="#333" stroke-width="1"/><text x="31.2" y="181.8" font-size="9.5" font-family="Liberation Sans" text-anchor="middle" fill="#222">2</text>
<rect x="244.0" y="203.0" width="16.0" height="11.0" rx="5" fill="#fff" stroke="#333" stroke-width="1"/><text x="252.0" y="211.8" font-size="9.5" font-family="Liberation Sans" text-anchor="middle" fill="#222">62</text>
<rect x="203.0" y="237.5" width="21.0" height="10.5" rx="5" fill="#fff" stroke="#333" stroke-width="1"/><text x="213.5" y="246.1" font-size="9.5" font-family="Liberation Sans" text-anchor="middle" fill="#222">117</text>
<path d="M61.6 235.4 h20 v6 q0 8 -10 10 q-10 -2 -10 -10z" fill="#3b6fc1" stroke="#fff" stroke-width="1"/><path d="M61.6 235.4 h20 v3.5 h-20z" fill="#d8453b"/><text x="71.6" y="246.4" font-size="8.5" font-weight="bold" font-family="Liberation Sans" text-anchor="middle" fill="#fff">190</text>
<rect x="225.0" y="283.0" width="16" height="4" fill="#d8453b"/>
<path d="M269.0 254.0 L276.0 237.0 L290.0 236.0 L286.0 242.0 Z" fill="#222" opacity=".75" filter="url(#blur2)"/>
<path d="M266.0 252.0 C264.0 240.0 256.5 237.0 256.5 229.5 C256.5 219.0 275.5 219.0 275.5 229.5 C275.5 237.0 268.0 240.0 266.0 252.0 Z" fill="#f37c74" stroke="#a8413a" stroke-width="1"/>
<circle cx="266.0" cy="230.0" r="2.6" fill="#111"/>
<text x="2.0" y="279.0" font-size="18" font-weight="bold" font-family="Liberation Serif" fill="#fff" stroke="#8a8a8a" stroke-width="1" paint-order="stroke" opacity=".95" letter-spacing="-.5">Google</text>
<rect x="314.0" y="269.0" width="195.0" height="17.0" fill="#fff" opacity=".5"/>
<text x="317.5" y="281.3" font-size="10" font-family="Liberation Sans" fill="#444">Map data ©2013 Google - <tspan text-decoration="underline">Terms of Use</tspan></text>
<rect x="509.5" y="268.5" width="91.0" height="17.5" fill="#f2f2f2" stroke="#e0e0e0" stroke-width=".5"/>
<text x="513.5" y="281.3" font-size="9.8" font-family="Liberation Sans" fill="#222">Report a map error</text>
<rect x="13.0" y="7.0" width="16" height="32.5" rx="2" fill="#fff" stroke="#b8b8b8" stroke-width=".8"/>
<circle cx="21.0" cy="12.5" r="2.6" fill="#f1a41f" stroke="#c77a10" stroke-width=".6"/><path d="M17.5 16.0 h7 v11 h-1.5 v9 h-4 v-9 h-1.5z" fill="#f1a41f" stroke="#c77a10" stroke-width=".6"/>
<rect x="13.0" y="51.0" width="16" height="32.5" rx="2" fill="#fff" stroke="#b8b8b8" stroke-width=".8"/>
<path d="M13.0 67.5 h16" stroke="#ddd"/>
<path d="M16.5 59.0 h9 M21.0 54.5 v9 M16.5 75.5 h9" stroke="#666" stroke-width="1.4"/>
<rect x="489.5" y="5.5" width="106.0" height="18.0" fill="#fff" stroke="#777" stroke-width="1" style="filter:drop-shadow(0 1px 2px rgba(0,0,0,.4))"/>
<path d="M530.5 5.5 v18" stroke="#999"/>
<text x="497.5" y="19.0" font-size="12.5" font-weight="bold" font-family="Liberation Sans" fill="#000">Map</text>
<text x="539.0" y="19.0" font-size="13" font-family="Liberation Sans" fill="#333">Satellite</text>
<path d="M159.5 35.5 L459.5 35.5 L459.5 150.0 L357.0 150.0 L267.5 217.0 L314.0 150.0 L159.5 150.0 Z" fill="#fff" stroke="#aaa" stroke-width="1"/>
<path d="M315.0 150.0 L356.0 150.0" fill="none" stroke="#fff" stroke-width="2"/>
<path d="M436.0 47.5 l9 9 M445.0 47.5 l-9 9" stroke="#aaa" stroke-width="1.8"/>
<text x="177.0" y="65.5" font-size="12.5" font-weight="bold" font-family="Liberation Sans" fill="#333">Leadership Seminar</text>
<text x="177.0" y="80.5" font-size="13.3" font-family="Liberation Sans" fill="#333">Thursday, 11-28-2013 06:00 PM</text>
<text x="177.0" y="95.5" font-size="13.5" font-family="Liberation Sans" fill="#333">100 5th Ave, Waltham, Massachusetts 0...</text>
<g transform="translate(178.0 116.0) scale(.9)"><path d="M2 15 L2.8 11.2 L11.5 2.6 L14.3 5.4 L5.6 14.1Z" fill="#505050"/><path d="M12 2.1 L13.2 0.9 Q14 0.3 14.8 1.1 L15.7 2 Q16.3 2.8 15.6 3.5 L14.6 4.5Z" fill="#505050"/><path d="M2 15 L2.8 11.2 L5.6 14.1Z" fill="#999"/></g>
<text x="199.0" y="128.0" font-size="13.5" font-family="Liberation Sans" fill="#3b6fd3" text-decoration="underline">Edit</text>
<path d="M230.0 123.0 q7 -7 14 0 q-7 7 -14 0z" fill="#444"/><circle cx="237.0" cy="123.0" r="2.3" fill="#fff"/><circle cx="237.0" cy="123.0" r="1.3" fill="#444"/>
<text x="248.5" y="128.0" font-size="13.5" font-family="Liberation Sans" fill="#3b6fd3" text-decoration="underline">View</text>
<path d="M288.5 131.0 h3 v-6.5 l4.5 -4.5 l1.6 1.6 v-5 h-5 l1.6 1.6 l-3.2 3.2 l-3 -3 v-1.8 h-5 v3.5 h2.2 l3.3 3.3z" fill="#5a5a5a"/>
<text x="303.5" y="128.0" font-size="13.5" font-family="Liberation Sans" fill="#3b6fd3" text-decoration="underline">Get directions</text>
</g></svg><!--MAPEND-->

<!-- BUDGET -->
<div class="abs" style="left:274px;top:630px;width:1267px;height:340px;border:1px solid #e3e3e3;border-radius:4px"></div>
<div class="h2" style="left:285px;top:638px">Budget Tracking</div>
<div class="rule" style="left:285px;top:668px;width:1245px;height:5px"></div>
<!--CHARTSTART--><svg class="abs" style="left:275px;top:673px" width="1265" height="289" viewBox="275 673 1265 289">
<path d="M361 880.5 H1519" stroke="#c8c8c8" stroke-width="1"/>
<text x="353" y="884.5" text-anchor="end" font-size="11" font-family="Liberation Sans" fill="#555">$1,000</text>
<path d="M361 807.5 H1519" stroke="#c8c8c8" stroke-width="1"/>
<text x="353" y="811.5" text-anchor="end" font-size="11" font-family="Liberation Sans" fill="#555">$2,000</text>
<path d="M361 733.5 H1519" stroke="#c8c8c8" stroke-width="1"/>
<text x="353" y="737.5" text-anchor="end" font-size="11" font-family="Liberation Sans" fill="#555">$3,000</text>
<text x="353" y="959.0" text-anchor="end" font-size="11" font-family="Liberation Sans" fill="#555">0</text>
<text transform="translate(310 818) rotate(-90)" text-anchor="middle" font-size="12" font-weight="bold" font-family="Liberation Sans" fill="#555">Budget</text>
<rect x="400.5" y="909.3" width="101" height="44.7" fill="#66c9fc"/>
<text x="451.0" y="902.3" text-anchor="middle" font-size="10.5" font-weight="bold" font-family="Liberation Sans" fill="#333">$600</text>
<rect x="503.5" y="934.9" width="101" height="19.1" fill="#cc3232"/>
<text x="554.0" y="927.9" text-anchor="middle" font-size="10.5" font-weight="bold" font-family="Liberation Sans" fill="#333">$250</text>
<rect x="606.5" y="927.6" width="101" height="26.4" fill="#99cc66"/>
<text x="657.0" y="920.6" text-anchor="middle" font-size="10.5" font-weight="bold" font-family="Liberation Sans" fill="#333">$350</text>
<rect x="786.5" y="879.9" width="101" height="74.1" fill="#66c9fc"/>
<text x="837.0" y="872.9" text-anchor="middle" font-size="10.5" font-weight="bold" font-family="Liberation Sans" fill="#333">$1,000</text>
<rect x="889.5" y="931.3" width="101" height="22.7" fill="#cc3232"/>
<text x="940.0" y="924.3" text-anchor="middle" font-size="10.5" font-weight="bold" font-family="Liberation Sans" fill="#333">$300</text>
<rect x="992.5" y="901.9" width="101" height="52.1" fill="#99cc66"/>
<text x="1043.0" y="894.9" text-anchor="middle" font-size="10.5" font-weight="bold" font-family="Liberation Sans" fill="#333">$700</text>
<rect x="1172.5" y="696.4" width="101" height="257.6" fill="#66c9fc"/>
<text x="1223.0" y="689.4" text-anchor="middle" font-size="10.5" font-weight="bold" font-family="Liberation Sans" fill="#333">$3,500</text>
<rect x="1275.5" y="924.6" width="101" height="29.4" fill="#cc3232"/>
<text x="1326.0" y="917.6" text-anchor="middle" font-size="10.5" font-weight="bold" font-family="Liberation Sans" fill="#333">$390.95</text>
<rect x="1378.5" y="725.1" width="101" height="228.9" fill="#99cc66"/>
<text x="1429.0" y="718.1" text-anchor="middle" font-size="10.5" font-weight="bold" font-family="Liberation Sans" fill="#333">$3109.05</text>
<path d="M361 953.5 H1519" stroke="#666" stroke-width="1.2"/>
<path d="M361.5 953 V958" stroke="#c0c0c0" stroke-width="1"/>
<path d="M747.5 953 V958" stroke="#c0c0c0" stroke-width="1"/>
<path d="M1133.5 953 V958" stroke="#c0c0c0" stroke-width="1"/>
<path d="M1519.5 953 V958" stroke="#c0c0c0" stroke-width="1"/>
<text x="554" y="969" text-anchor="middle" font-size="11" font-family="Liberation Sans" fill="#555">FY14 Sales Kickoff</text>
<text x="940" y="969" text-anchor="middle" font-size="11" font-family="Liberation Sans" fill="#555">Leadership Seminar</text>
<text x="1326" y="969" text-anchor="middle" font-size="11" font-family="Liberation Sans" fill="#555">Spring Fling 2014</text>
</svg>
<svg class="abs" style="left:1478px;top:637px" width="20" height="20" viewBox="0 0 20 20"><path d="M3 17 L17 3 M10 3 H17 V10 M3 10 V17 H10" fill="none" stroke="#c6c6c6" stroke-width="1.6"/></svg>
<svg class="abs" style="left:1510px;top:640px" width="20" height="15" viewBox="0 0 20 15"><path d="M1 2 H19 M1 7 H19 M1 12 H19" stroke="#bdbdbd" stroke-width="2"/></svg><!--CHARTEND-->
</body></html>
